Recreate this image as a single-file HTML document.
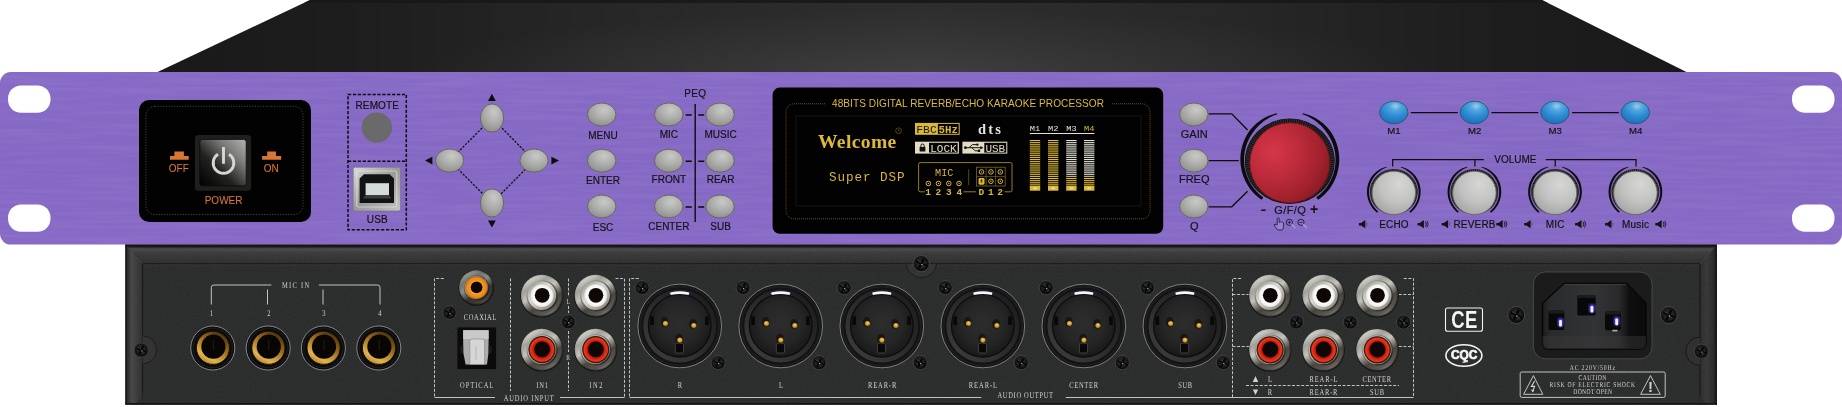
<!DOCTYPE html>
<html><head><meta charset="utf-8"><title>48BITS DIGITAL REVERB/ECHO KARAOKE PROCESSOR</title>
<style>html,body{margin:0;padding:0;background:#fff;}body{width:1842px;height:407px;overflow:hidden;font-family:"Liberation Sans",sans-serif;}svg{display:block}</style>
</head><body>
<svg style="opacity:0.9999" width="1842" height="407" viewBox="0 0 1842 407">

<defs>
<linearGradient id="topg" x1="157" y1="0" x2="1687" y2="0" gradientUnits="userSpaceOnUse">
<stop offset="0" stop-color="#181918"/><stop offset="0.12" stop-color="#1c1d1c"/><stop offset="0.3" stop-color="#262726"/><stop offset="0.5" stop-color="#2d2e2d"/><stop offset="0.7" stop-color="#262726"/><stop offset="0.88" stop-color="#1c1d1c"/><stop offset="1" stop-color="#181918"/></linearGradient>
<radialGradient id="topglow" cx="921" cy="76" r="520" gradientUnits="userSpaceOnUse" gradientTransform="translate(0 76) scale(1 0.13) translate(0 -76)">
<stop offset="0" stop-color="#fff" stop-opacity="0.085"/><stop offset="0.5" stop-color="#fff" stop-opacity="0.04"/><stop offset="1" stop-color="#fff" stop-opacity="0"/></radialGradient>
<linearGradient id="purp" x1="0" y1="0" x2="0" y2="1">
<stop offset="0" stop-color="#876ac6"/><stop offset="0.5" stop-color="#8568c4"/><stop offset="1" stop-color="#876ac6"/></linearGradient>
<filter id="brush" x="0" y="0" width="100%" height="100%">
<feTurbulence type="fractalNoise" baseFrequency="0.012 0.24" numOctaves="2" seed="7" result="n"/>
<feColorMatrix in="n" type="matrix" values="0 0 0 0 1  0 0 0 0 1  0 0 0 0 1  0.9 0 0 0 -0.36" result="a"/>
<feComposite in="a" in2="SourceGraphic" operator="in"/>
</filter>
<filter id="brushd" x="0" y="0" width="100%" height="100%">
<feTurbulence type="fractalNoise" baseFrequency="0.010 0.2" numOctaves="2" seed="23" result="n"/>
<feColorMatrix in="n" type="matrix" values="0 0 0 0 0.32  0 0 0 0 0.2  0 0 0 0 0.6  0.9 0 0 0 -0.36" result="a"/>
<feComposite in="a" in2="SourceGraphic" operator="in"/>
</filter>
<filter id="grain" x="0" y="0" width="100%" height="100%">
<feTurbulence type="fractalNoise" baseFrequency="0.9" numOctaves="2" seed="3" result="n"/>
<feColorMatrix in="n" type="matrix" values="0 0 0 0 1  0 0 0 0 1  0 0 0 0 1  0.55 0 0 0 -0.22" result="a"/>
<feComposite in="a" in2="SourceGraphic" operator="in"/>
</filter>
<filter id="blur1"><feGaussianBlur stdDeviation="0.8"/></filter>
<filter id="blur2"><feGaussianBlur stdDeviation="1.6"/></filter>
<radialGradient id="btn" cx="0.58" cy="0.3" r="0.75">
<stop offset="0" stop-color="#c9c9c7"/><stop offset="0.5" stop-color="#adaeab"/><stop offset="1" stop-color="#8c8d89"/></radialGradient>
<radialGradient id="bbtn" cx="0.56" cy="0.22" r="0.8">
<stop offset="0" stop-color="#9dcbe4"/><stop offset="0.25" stop-color="#4fa6e0"/><stop offset="0.6" stop-color="#2b88d2"/><stop offset="1" stop-color="#1b6fb8"/></radialGradient>
<radialGradient id="redk" cx="0.3" cy="0.36" r="0.8">
<stop offset="0" stop-color="#d5364a"/><stop offset="0.4" stop-color="#bd2b3a"/><stop offset="0.75" stop-color="#a1212c"/><stop offset="1" stop-color="#821820"/></radialGradient>
<radialGradient id="greyk" cx="0.62" cy="0.3" r="0.85">
<stop offset="0" stop-color="#d6d6d4"/><stop offset="0.5" stop-color="#c2c2c0"/><stop offset="1" stop-color="#9c9c9a"/></radialGradient>
<linearGradient id="pwr" x1="1" y1="0" x2="0" y2="1">
<stop offset="0" stop-color="#b4b5b3"/><stop offset="0.3" stop-color="#7a7b79"/><stop offset="0.62" stop-color="#222221"/><stop offset="1" stop-color="#000"/></linearGradient>
<linearGradient id="usbm" x1="0" y1="0" x2="1" y2="1">
<stop offset="0" stop-color="#d9d9d7"/><stop offset="0.5" stop-color="#9a9a98"/><stop offset="1" stop-color="#c4c4c2"/></linearGradient>
<linearGradient id="goldring" x1="0.8" y1="0" x2="0.2" y2="1">
<stop offset="0" stop-color="#3e2808"/><stop offset="0.4" stop-color="#98681a"/><stop offset="0.78" stop-color="#e2b44e"/><stop offset="1" stop-color="#aa7626"/></linearGradient>
<linearGradient id="silver" x1="0.2" y1="0" x2="0.8" y2="1">
<stop offset="0" stop-color="#ecece6"/><stop offset="0.24" stop-color="#a2a29a"/><stop offset="0.42" stop-color="#c4c4bc"/><stop offset="0.66" stop-color="#48443e"/><stop offset="0.86" stop-color="#5c5852"/><stop offset="1" stop-color="#bcbcb4"/></linearGradient>
<linearGradient id="rimsh" x1="0" y1="0" x2="1" y2="1"><stop offset="0" stop-color="#fff" stop-opacity="0.5"/><stop offset="0.5" stop-color="#000" stop-opacity="0"/><stop offset="1" stop-color="#000" stop-opacity="0.55"/></linearGradient>
<linearGradient id="groove" x1="0.1" y1="0.1" x2="0.9" y2="0.9"><stop offset="0" stop-color="#b0b0aa"/><stop offset="0.4" stop-color="#6a6a62"/><stop offset="1" stop-color="#1e1a16"/></linearGradient>
<linearGradient id="lip" x1="0.15" y1="0.1" x2="0.85" y2="0.9"><stop offset="0" stop-color="#a4a49e"/><stop offset="0.4" stop-color="#dcdcd6"/><stop offset="1" stop-color="#8c8a84"/></linearGradient>
<radialGradient id="wins" cx="0.5" cy="0.5" r="0.5"><stop offset="0.6" stop-color="#ffffff"/><stop offset="0.88" stop-color="#f4f2ee"/><stop offset="1" stop-color="#cfccc6"/></radialGradient>
<radialGradient id="rins" cx="0.5" cy="0.5" r="0.5"><stop offset="0.6" stop-color="#a81206"/><stop offset="0.78" stop-color="#dc2812"/><stop offset="0.92" stop-color="#e83a20"/><stop offset="1" stop-color="#8a180a"/></radialGradient>
<radialGradient id="oins" cx="0.5" cy="0.5" r="0.5"><stop offset="0.5" stop-color="#f8b050"/><stop offset="0.68" stop-color="#f4901a"/><stop offset="0.9" stop-color="#ee860e"/><stop offset="1" stop-color="#a85a0c"/></radialGradient>
<linearGradient id="bevt" x1="0" y1="247" x2="0" y2="264" gradientUnits="userSpaceOnUse"><stop offset="0" stop-color="#2a2a2a"/><stop offset="0.12" stop-color="#4a4a4a"/><stop offset="0.35" stop-color="#3b3b3b"/><stop offset="1" stop-color="#2e2e2e"/></linearGradient>
<linearGradient id="bevl" x1="125.5" y1="0" x2="142.5" y2="0" gradientUnits="userSpaceOnUse"><stop offset="0" stop-color="#1e1e1e"/><stop offset="0.12" stop-color="#2c2c2c"/><stop offset="0.36" stop-color="#474747"/><stop offset="0.65" stop-color="#3c3c3c"/><stop offset="1" stop-color="#2f2f2f"/></linearGradient>
<linearGradient id="bevr" x1="1700" y1="0" x2="1717" y2="0" gradientUnits="userSpaceOnUse"><stop offset="0" stop-color="#2d2d2d"/><stop offset="0.4" stop-color="#373737"/><stop offset="0.75" stop-color="#2c2c2c"/><stop offset="1" stop-color="#171717"/></linearGradient>
<linearGradient id="cav" x1="1542.5" y1="0" x2="1646" y2="0" gradientUnits="userSpaceOnUse"><stop offset="0" stop-color="#1c1c1d"/><stop offset="0.08" stop-color="#2a2b2c"/><stop offset="0.5" stop-color="#323335"/><stop offset="0.74" stop-color="#2a2a2c"/><stop offset="0.84" stop-color="#0f0f0f"/><stop offset="1" stop-color="#0a0a0a"/></linearGradient>
<linearGradient id="xlbev" x1="0.85" y1="0.1" x2="0.15" y2="0.9"><stop offset="0" stop-color="#1e1e1e"/><stop offset="0.5" stop-color="#2a2a2a"/><stop offset="1" stop-color="#3a3a3a"/></linearGradient>
<radialGradient id="xlrin" cx="0.5" cy="0.45" r="0.6">
<stop offset="0" stop-color="#2d2d2d"/><stop offset="0.55" stop-color="#262626"/><stop offset="0.85" stop-color="#1b1b1b"/><stop offset="1" stop-color="#121212"/></radialGradient>
<radialGradient id="pin" cx="0.5" cy="0.4" r="0.6">
<stop offset="0" stop-color="#f6d878"/><stop offset="0.6" stop-color="#c8962c"/><stop offset="1" stop-color="#6a4810"/></radialGradient>
<radialGradient id="scr" cx="0.45" cy="0.4" r="0.6">
<stop offset="0" stop-color="#2e2e2e"/><stop offset="0.6" stop-color="#151515"/><stop offset="1" stop-color="#080808"/></radialGradient>
<pattern id="strG" x="0" y="140" width="12" height="1.9" patternUnits="userSpaceOnUse"><rect width="12" height="1.0" fill="#e4c03a"/></pattern>
<pattern id="strW" x="0" y="140" width="12" height="1.9" patternUnits="userSpaceOnUse"><rect width="12" height="1.0" fill="#ece9dc"/></pattern>
<g id="screw7">
<circle r="7.4" fill="#0c0c0c"/><circle r="7.1" fill="url(#scr)" stroke="#909090" stroke-width="0.5" stroke-opacity="0.75"/>
<circle r="4.6" fill="#242424" opacity="0.9"/>
<path d="M-3.7 -1.7 L3.7 1.7 M-1.7 3.5 L1.7 -3.5" stroke="#040404" stroke-width="1.9" stroke-linecap="round"/>
<path d="M-3.4 -2.5 L0 -0.9 M0.6 1.3 L3.2 2.5" stroke="#6a6a6a" stroke-width="0.5" opacity="0.9"/>
<circle cx="0.5" cy="0.8" r="0.65" fill="#d8d8d8" opacity="0.85"/>
</g>
<g id="spkL"><path d="M0 2.5 H2.2 L6.4 -0.3 V7.8 L2.2 5 H0 Z" fill="#141414"/><path d="M7.4 2 Q8.6 3.75 7.4 5.5" fill="none" stroke="#3c3360" stroke-width="0.8" opacity="0.7"/></g>
<g id="spkR"><path d="M0 2.5 H2.2 L6.4 -0.3 V7.8 L2.2 5 H0 Z" fill="#141414"/>
<path d="M7.8 1.4 Q9.8 3.75 7.8 6.1" fill="none" stroke="#2a2540" stroke-width="1.1"/>
<path d="M9.4 0.3 Q12 3.75 9.4 7.2" fill="none" stroke="#2a2540" stroke-width="1"/></g>
</defs>

<polygon points="310,0 1542,0 1687.5,72.5 156.5,72.5" fill="url(#topg)"/>
<polygon points="310,0 1542,0 1687.5,72.5 156.5,72.5" fill="url(#topglow)"/>
<polygon points="310,0 1542,0 1548,3 304,3" fill="#161716" opacity="0.85"/>
<rect x="125.5" y="244.2" width="1591.5" height="160.40000000000003" fill="#2b2c2c"/>
<polygon points="125.5,244.2 1717,244.2 1700,264 142.5,264" fill="url(#bevt)"/>
<polygon points="125.5,244.2 142.5,264 142.5,404.6 125.5,404.6" fill="url(#bevl)"/>
<polygon points="1717,244.2 1700,264 1700,404.6 1717,404.6" fill="url(#bevr)"/>
<rect x="142.5" y="264" width="1557.5" height="140.60000000000002" fill="#2b2c2c"/>
<path d="M142.5 404.6 V263.8 H1700 V404.6" fill="none" stroke="#171717" stroke-width="1.1"/>
<path d="M143.5 265 H1699" fill="none" stroke="#3c3d3d" stroke-width="0.6"/>
<path d="M126.5 246.2 L142.5 264 M1716 246.2 L1700 264" fill="none" stroke="#4a4a4a" stroke-width="0.7"/>
<rect x="125.5" y="244.2" width="1591.5" height="3" fill="#161616"/>
<rect x="125.5" y="244.2" width="1.4" height="160.40000000000003" fill="#1a1a1a"/>
<rect x="1715.4" y="244.2" width="1.6" height="160.40000000000003" fill="#171717"/>
<path d="M142.5 392 Q142 402 131 404.6 H143 Z" fill="#2b2c2c"/>
<path d="M1700 392 Q1700.5 402 1711 404.6 H1699 Z" fill="#2b2c2c"/>
<rect x="125.5" y="403.0" width="1591.5" height="1.6" fill="#12131a"/>
<rect x="125.5" y="244.2" width="1591.5" height="160.40000000000003" fill="#fff" filter="url(#grain)" opacity="0.15"/>
<g>
<rect x="0" y="72" width="1842" height="172.6" rx="11" ry="11" fill="url(#purp)"/>
<rect x="0" y="72" width="1842" height="172.6" rx="11" ry="11" fill="#fff" filter="url(#brush)" opacity="0.13"/>
<rect x="0" y="72" width="1842" height="172.6" rx="11" ry="11" fill="#fff" filter="url(#brushd)" opacity="0.22"/>
</g>
<rect x="8" y="85.5" width="42.5" height="27.2" rx="13" ry="13" fill="#fff"/>
<rect x="8" y="204.5" width="42.5" height="27.2" rx="13" ry="13" fill="#fff"/>
<rect x="1792" y="85.5" width="42.5" height="27.2" rx="13" ry="13" fill="#fff"/>
<rect x="1792" y="204.5" width="42.5" height="27.2" rx="13" ry="13" fill="#fff"/>
<rect x="139" y="100" width="172" height="122" rx="10" ry="10" fill="#020202"/>
<rect x="146" y="106.3" width="157" height="108.2" rx="9" ry="9" fill="none" stroke="#4c4c4c" stroke-width="0.9" stroke-dasharray="1.2 1.5"/>
<rect x="194.9" y="135" width="56.2" height="55.8" rx="3.5" fill="#1f201d"/>
<rect x="199.8" y="139.4" width="46.4" height="46.4" rx="2.5" fill="url(#pwr)"/>
<rect x="199.8" y="139.4" width="46.4" height="46.4" rx="2.5" fill="none" stroke="#0a0a0a" stroke-width="0.8"/>
<path d="M228.96 154.27 A10.3 10.3 0 1 1 218.04 154.27" fill="none" stroke="#d6d6d4" stroke-width="2.9" stroke-linecap="butt"/>
<path d="M223.5 147 V163.8" stroke="#d6d6d4" stroke-width="2.9"/>
<path d="M174.4 151.5 H183.9 V156 H188.7 V159.7 H170 V156 H174.4 Z" fill="#da7634"/>
<path d="M267.2 151.5 H276 V156 H281.2 V159.7 H262.1 V156 H267.2 Z" fill="#da7634"/>
<text x="178.8" y="172" font-size="10" text-anchor="middle" font-family="Liberation Sans, Arial, sans-serif" fill="#da7634" stroke="#da7634" stroke-width="0.08" >OFF</text>
<text x="271.2" y="172" font-size="10" text-anchor="middle" font-family="Liberation Sans, Arial, sans-serif" fill="#da7634" stroke="#da7634" stroke-width="0.08" >ON</text>
<text x="223.6" y="204" font-size="10" text-anchor="middle" font-family="Liberation Sans, Arial, sans-serif" fill="#da7634" stroke="#da7634" stroke-width="0.08" >POWER</text>
<path d="M348 94.5 H406.3 V229.8 H348 Z M348 161.2 H406.3" fill="none" stroke="#0c0c0c" stroke-width="1.5" stroke-dasharray="3.2 1.7"/>
<text x="377.3" y="109.2" font-size="10" text-anchor="middle" font-family="Liberation Sans, Arial, sans-serif" fill="#141414" stroke="#141414" stroke-width="0.18" letter-spacing="0.15">REMOTE</text>
<circle cx="376.8" cy="127.6" r="15.2" fill="#6a6a6a"/>
<rect x="353.2" y="167.2" width="47.3" height="43.8" rx="2" fill="url(#usbm)"/>
<rect x="353.2" y="167.2" width="47.3" height="43.8" rx="2" fill="none" stroke="#777" stroke-width="0.7"/>
<rect x="356.8" y="171" width="40" height="36" rx="1.5" fill="none" stroke="#efefef" stroke-width="1.2" opacity="0.55"/>
<path d="M364 174.3 H389.6 L394 178.5 V203 H359.6 V178.5 Z" fill="#131313"/>
<path d="M365.6 183.2 H389 V195 H365.6 Z" fill="#d3dbdb"/>
<path d="M365.6 195 H389 L391.5 198.5 H362.8 Z" fill="#3c3d3d"/>
<text x="377.4" y="223.3" font-size="10" text-anchor="middle" font-family="Liberation Sans, Arial, sans-serif" fill="#141414" stroke="#141414" stroke-width="0.18" letter-spacing="0.2">USB</text>
<path d="M492 118 L534 160.6 L492 203 L449.6 160.6 Z" fill="none" stroke="#111" stroke-width="1.3" stroke-dasharray="2.2 1.4"/>
<ellipse cx="492" cy="118" rx="11.6" ry="14.1" fill="url(#btn)" stroke="#62635a" stroke-width="0.9"/>
<ellipse cx="492" cy="203" rx="11.6" ry="14.1" fill="url(#btn)" stroke="#62635a" stroke-width="0.9"/>
<ellipse cx="449.6" cy="160.6" rx="14.1" ry="11.6" fill="url(#btn)" stroke="#62635a" stroke-width="0.9"/>
<ellipse cx="534" cy="160.6" rx="14.1" ry="11.6" fill="url(#btn)" stroke="#62635a" stroke-width="0.9"/>
<path d="M491.9 93.8 L495.8 101 H488 Z" fill="#0c0c0c"/>
<path d="M491.9 227.6 L495.8 220.6 H488 Z" fill="#0c0c0c"/>
<path d="M425 160.6 L432.4 156.8 V164.4 Z" fill="#0c0c0c"/>
<path d="M559 160.6 L551.4 156.8 V164.4 Z" fill="#0c0c0c"/>
<ellipse cx="601.7" cy="114.5" rx="14.25" ry="11.5" fill="url(#btn)" stroke="#62635a" stroke-width="0.9"/>
<text x="603" y="138.7" font-size="10" text-anchor="middle" font-family="Liberation Sans, Arial, sans-serif" fill="#141414" stroke="#141414" stroke-width="0.18" >MENU</text>
<ellipse cx="601.7" cy="160.7" rx="14.25" ry="11.5" fill="url(#btn)" stroke="#62635a" stroke-width="0.9"/>
<text x="603" y="184" font-size="10" text-anchor="middle" font-family="Liberation Sans, Arial, sans-serif" fill="#141414" stroke="#141414" stroke-width="0.18" >ENTER</text>
<ellipse cx="601.7" cy="206.5" rx="14.25" ry="11.5" fill="url(#btn)" stroke="#62635a" stroke-width="0.9"/>
<text x="603" y="231" font-size="10" text-anchor="middle" font-family="Liberation Sans, Arial, sans-serif" fill="#141414" stroke="#141414" stroke-width="0.18" >ESC</text>
<text x="695.3" y="97.1" font-size="10" text-anchor="middle" font-family="Liberation Sans, Arial, sans-serif" fill="#141414" stroke="#141414" stroke-width="0.18" letter-spacing="0.3">PEQ</text>
<path d="M695.2 104 V222" stroke="#0c0c0c" stroke-width="1.4"/>
<ellipse cx="668.7" cy="114.5" rx="14.25" ry="11.5" fill="url(#btn)" stroke="#62635a" stroke-width="0.9"/>
<ellipse cx="720" cy="114.5" rx="14.25" ry="11.5" fill="url(#btn)" stroke="#62635a" stroke-width="0.9"/>
<path d="M685.6 115.0 H691.8 M698.2 115.0 H704.2" stroke="#0a0a0a" stroke-width="1.5"/>
<text x="668.8" y="137.6" font-size="10" text-anchor="middle" font-family="Liberation Sans, Arial, sans-serif" fill="#141414" stroke="#141414" stroke-width="0.18" >MIC</text>
<text x="720.6" y="137.6" font-size="10" text-anchor="middle" font-family="Liberation Sans, Arial, sans-serif" fill="#141414" stroke="#141414" stroke-width="0.18" >MUSIC</text>
<ellipse cx="668.7" cy="160.7" rx="14.25" ry="11.5" fill="url(#btn)" stroke="#62635a" stroke-width="0.9"/>
<ellipse cx="720" cy="160.7" rx="14.25" ry="11.5" fill="url(#btn)" stroke="#62635a" stroke-width="0.9"/>
<path d="M685.6 161.2 H691.8 M698.2 161.2 H704.2" stroke="#0a0a0a" stroke-width="1.5"/>
<text x="668.8" y="182.6" font-size="10" text-anchor="middle" font-family="Liberation Sans, Arial, sans-serif" fill="#141414" stroke="#141414" stroke-width="0.18" >FRONT</text>
<text x="720.6" y="182.6" font-size="10" text-anchor="middle" font-family="Liberation Sans, Arial, sans-serif" fill="#141414" stroke="#141414" stroke-width="0.18" >REAR</text>
<ellipse cx="668.7" cy="206.5" rx="14.25" ry="11.5" fill="url(#btn)" stroke="#62635a" stroke-width="0.9"/>
<ellipse cx="720" cy="206.5" rx="14.25" ry="11.5" fill="url(#btn)" stroke="#62635a" stroke-width="0.9"/>
<path d="M685.6 207.0 H691.8 M698.2 207.0 H704.2" stroke="#0a0a0a" stroke-width="1.5"/>
<text x="668.8" y="229.6" font-size="10" text-anchor="middle" font-family="Liberation Sans, Arial, sans-serif" fill="#141414" stroke="#141414" stroke-width="0.18" >CENTER</text>
<text x="720.6" y="229.6" font-size="10" text-anchor="middle" font-family="Liberation Sans, Arial, sans-serif" fill="#141414" stroke="#141414" stroke-width="0.18" >SUB</text>
<rect x="772.6" y="87.6" width="390.6" height="146.2" rx="7" fill="#020202"/>
<rect x="786" y="103.8" width="364" height="115" rx="8" fill="none" stroke="#8a7424" stroke-width="0.8" stroke-dasharray="0.9 1.1"/>
<rect x="826" y="99" width="285" height="10" fill="#020202"/>
<rect x="796" y="116" width="345" height="90" fill="none" stroke="#151512" stroke-width="1"/>
<text x="832" y="107" font-size="10.1" textLength="272" lengthAdjust="spacing" font-family="Liberation Sans, Arial, sans-serif" fill="#dbbb3c">48BITS DIGITAL REVERB/ECHO KARAOKE PROCESSOR</text>
<text x="818" y="148" font-size="19.6" font-weight="bold" textLength="78.3" lengthAdjust="spacing" font-family="Liberation Serif, Times New Roman, serif" fill="#dcba38">Welcome</text>
<circle cx="898.6" cy="130.8" r="2.9" fill="none" stroke="#6f5c1c" stroke-width="0.7"/><path d="M898.6 129 V130.9 H900" fill="none" stroke="#6f5c1c" stroke-width="0.6"/>
<text x="829" y="180.7" font-size="12.6" textLength="75.5" lengthAdjust="spacing" font-family="Liberation Mono, DejaVu Sans Mono, monospace" fill="#d9b83a">Super DSP</text>
<rect x="915" y="122.9" width="44.7" height="11.9" fill="#d9b83a"/>
<rect x="937.9" y="123.9" width="20.8" height="9.9" fill="#050505"/>
<text x="916.2" y="132.6" font-size="10" textLength="20.6" lengthAdjust="spacingAndGlyphs" font-family="Liberation Mono, DejaVu Sans Mono, monospace" fill="#1a1405">FBC</text>
<text x="938.6" y="132.6" font-size="10" font-weight="bold" textLength="19.4" lengthAdjust="spacingAndGlyphs" font-family="Liberation Mono, DejaVu Sans Mono, monospace" fill="#d9b83a">5Hz</text>
<text x="978" y="133.8" font-size="14.5" font-weight="bold" textLength="22.8" lengthAdjust="spacing" font-family="Liberation Serif, Times New Roman, serif" fill="#e4e2dc">dts</text>
<rect x="915" y="141.7" width="43.9" height="11.9" fill="#e3dcc2"/>
<rect x="929" y="142.8" width="28.7" height="9.8" fill="#060606"/>
<rect x="919.6" y="147" width="5.8" height="4.6" rx="0.6" fill="#111"/><path d="M920.9 147.2 V145.6 A1.6 1.6 0 0 1 924.1 145.6 V147.2" fill="none" stroke="#111" stroke-width="1"/>
<text x="930.2" y="151.6" font-size="10" textLength="26.4" lengthAdjust="spacingAndGlyphs" font-family="Liberation Mono, DejaVu Sans Mono, monospace" fill="#e3dcc2">LOCK</text>
<rect x="962.4" y="141.7" width="44.9" height="11.9" fill="#e3dcc2"/>
<rect x="984.3" y="142.8" width="22" height="9.8" fill="#060606"/>
<path d="M965 147.7 H982 M969 147.7 L972.5 144.6 H976.5 M972 147.7 L975 150.8 H978.5" fill="none" stroke="#111" stroke-width="1"/><circle cx="965.4" cy="147.7" r="1.4" fill="#111"/><path d="M980.3 145.9 L983.4 147.7 L980.3 149.5Z" fill="#111"/><circle cx="977.3" cy="144.6" r="1.2" fill="#111"/><rect x="977.8" y="149.6" width="2.4" height="2.4" fill="#111"/>
<text x="985.4" y="151.6" font-size="10" textLength="19.8" lengthAdjust="spacingAndGlyphs" font-family="Liberation Mono, DejaVu Sans Mono, monospace" fill="#e3dcc2">USB</text>
<text x="1029.8" y="131.3" font-size="7.5" textLength="10.4" lengthAdjust="spacingAndGlyphs" font-family="Liberation Mono, DejaVu Sans Mono, monospace" fill="#e6e3d6">M1</text>
<rect x="1029.8" y="140" width="10.4" height="46" fill="url(#strG)"/>
<rect x="1029.8" y="186" width="10.4" height="4.7" fill="#d9b83a"/>
<rect x="1033.2" y="187.3" width="3.6" height="2" fill="#f0dc88"/>
<text x="1048" y="131.3" font-size="7.5" textLength="10.4" lengthAdjust="spacingAndGlyphs" font-family="Liberation Mono, DejaVu Sans Mono, monospace" fill="#e6e3d6">M2</text>
<rect x="1048" y="140" width="10.4" height="46" fill="url(#strG)"/>
<rect x="1048" y="186" width="10.4" height="4.7" fill="#d9b83a"/>
<rect x="1051.4" y="187.3" width="3.6" height="2" fill="#f0dc88"/>
<text x="1066.2" y="131.3" font-size="7.5" textLength="10.4" lengthAdjust="spacingAndGlyphs" font-family="Liberation Mono, DejaVu Sans Mono, monospace" fill="#e6e3d6">M3</text>
<rect x="1066.2" y="140" width="10.4" height="35.6" fill="url(#strW)"/>
<rect x="1066.2" y="175.6" width="10.4" height="10.4" fill="url(#strG)"/>
<rect x="1066.2" y="186" width="10.4" height="4.7" fill="#d9b83a"/>
<rect x="1069.6000000000001" y="187.3" width="3.6" height="2" fill="#f0dc88"/>
<text x="1084" y="131.3" font-size="7.5" textLength="10.4" lengthAdjust="spacingAndGlyphs" font-family="Liberation Mono, DejaVu Sans Mono, monospace" fill="#d9b83a">M4</text>
<rect x="1084" y="140" width="10.4" height="35.6" fill="url(#strW)"/>
<rect x="1084" y="175.6" width="10.4" height="10.4" fill="url(#strG)"/>
<rect x="1084" y="186" width="10.4" height="4.7" fill="#d9b83a"/>
<rect x="1087.4" y="187.3" width="3.6" height="2" fill="#f0dc88"/>
<path d="M1029.8 133.5 H1094.4" stroke="#e6e2ce" stroke-width="1.1"/>
<path d="M924.8 191.8 H920.2 Q918.6 191.8 918.6 190.2 V164.2 Q918.6 162.6 920.2 162.6 H1010.4 Q1012 162.6 1012 164.2 V190.2 Q1012 191.8 1010.4 191.8 H1004.4 M963.5 191.8 H976" fill="none" stroke="#b89a2e" stroke-width="0.8"/>
<text x="935" y="176" font-size="10.2" textLength="18.4" lengthAdjust="spacingAndGlyphs" font-family="Liberation Mono, DejaVu Sans Mono, monospace" fill="#d9b83a">MIC</text>
<circle cx="928.4" cy="183.5" r="2.3" fill="none" stroke="#d9b83a" stroke-width="1"/><circle cx="928.4" cy="183.5" r="0.7" fill="#d9b83a"/>
<circle cx="938.5" cy="183.5" r="2.3" fill="none" stroke="#d9b83a" stroke-width="1"/><circle cx="938.5" cy="183.5" r="0.7" fill="#d9b83a"/>
<circle cx="948.8" cy="183.5" r="2.3" fill="none" stroke="#d9b83a" stroke-width="1"/><circle cx="948.8" cy="183.5" r="0.7" fill="#d9b83a"/>
<circle cx="959" cy="183.5" r="2.3" fill="none" stroke="#d9b83a" stroke-width="1"/><circle cx="959" cy="183.5" r="0.7" fill="#d9b83a"/>
<path d="M968.7 169.3 V185" stroke="#6b5a20" stroke-width="0.8"/>
<rect x="976.6" y="167.2" width="28.6" height="18.8" fill="none" stroke="#7d6922" stroke-width="0.8"/>
<path d="M986.1 167.2 V186 M995.6 167.2 V186 M976.6 176.6 H1005.2" stroke="#7d6922" stroke-width="0.7"/>
<circle cx="981.5" cy="171.9" r="2.3" fill="none" stroke="#d9b83a" stroke-width="1"/><circle cx="981.5" cy="171.9" r="0.7" fill="#d9b83a"/>
<rect x="978.5" y="177.9" width="6" height="6.8" rx="1.4" fill="#d9b83a"/><rect x="980.7" y="179.5" width="1.6" height="3" fill="#3a2d08"/>
<circle cx="990.9" cy="171.9" r="2.3" fill="none" stroke="#d9b83a" stroke-width="1"/><circle cx="990.9" cy="171.9" r="0.7" fill="#d9b83a"/>
<circle cx="990.9" cy="181.3" r="2.3" fill="none" stroke="#d9b83a" stroke-width="1"/><circle cx="990.9" cy="181.3" r="0.7" fill="#d9b83a"/>
<circle cx="1000.3" cy="171.9" r="2.3" fill="none" stroke="#d9b83a" stroke-width="1"/><circle cx="1000.3" cy="171.9" r="0.7" fill="#d9b83a"/>
<circle cx="1000.3" cy="181.3" r="2.3" fill="none" stroke="#d9b83a" stroke-width="1"/><circle cx="1000.3" cy="181.3" r="0.7" fill="#d9b83a"/>
<text x="928" y="195.3" font-size="9.5" font-weight="bold" text-anchor="middle" font-family="Liberation Mono, DejaVu Sans Mono, monospace" fill="#d9b83a">1</text>
<text x="938.4" y="195.3" font-size="9.5" font-weight="bold" text-anchor="middle" font-family="Liberation Mono, DejaVu Sans Mono, monospace" fill="#d9b83a">2</text>
<text x="948.8" y="195.3" font-size="9.5" font-weight="bold" text-anchor="middle" font-family="Liberation Mono, DejaVu Sans Mono, monospace" fill="#d9b83a">3</text>
<text x="959.3" y="195.3" font-size="9.5" font-weight="bold" text-anchor="middle" font-family="Liberation Mono, DejaVu Sans Mono, monospace" fill="#d9b83a">4</text>
<text x="981.4" y="195.3" font-size="9.5" font-weight="bold" text-anchor="middle" font-family="Liberation Mono, DejaVu Sans Mono, monospace" fill="#d9b83a">D</text>
<text x="990.8" y="195.3" font-size="9.5" font-weight="bold" text-anchor="middle" font-family="Liberation Mono, DejaVu Sans Mono, monospace" fill="#d9b83a">1</text>
<text x="1000.2" y="195.3" font-size="9.5" font-weight="bold" text-anchor="middle" font-family="Liberation Mono, DejaVu Sans Mono, monospace" fill="#d9b83a">2</text>
<path d="M1208.6 113.8 H1231.8 L1247.6 130 M1208.6 160.6 H1238.8 M1208.6 206.8 H1231.8 L1247.6 191.2" fill="none" stroke="#0c0c0c" stroke-width="1.3"/>
<ellipse cx="1193.8" cy="114.5" rx="14.25" ry="11.5" fill="url(#btn)" stroke="#62635a" stroke-width="0.9"/>
<text x="1194.2" y="137.5" font-size="11" text-anchor="middle" font-family="Liberation Sans, Arial, sans-serif" fill="#141414" stroke="#141414" stroke-width="0.18" >GAIN</text>
<ellipse cx="1193.8" cy="160.7" rx="14.25" ry="11.5" fill="url(#btn)" stroke="#62635a" stroke-width="0.9"/>
<text x="1194.2" y="182.6" font-size="11" text-anchor="middle" font-family="Liberation Sans, Arial, sans-serif" fill="#141414" stroke="#141414" stroke-width="0.18" >FREQ</text>
<ellipse cx="1193.8" cy="206.5" rx="14.25" ry="11.5" fill="url(#btn)" stroke="#62635a" stroke-width="0.9"/>
<text x="1194.2" y="230" font-size="11" text-anchor="middle" font-family="Liberation Sans, Arial, sans-serif" fill="#141414" stroke="#141414" stroke-width="0.18" >Q</text>
<path d="M1302.64 113.30 L1304.86 113.79 L1307.04 114.43 L1309.20 115.19 L1311.31 116.05 L1313.39 117.03 L1315.42 118.10 L1317.40 119.27 L1319.32 120.54 L1321.18 121.91 L1322.98 123.36 L1324.71 124.90 L1326.37 126.53 L1327.95 128.24 L1329.45 130.02 L1330.82 131.90 L1332.08 133.86 L1333.24 135.88 L1334.31 137.95 L1335.28 140.07 L1336.14 142.23 L1336.91 144.44 L1337.56 146.67 L1338.11 148.94 L1338.56 151.22 L1338.89 153.53 L1339.12 155.85 L1339.23 158.17 L1339.23 160.50 L1339.13 162.82 L1338.91 165.14 L1338.59 167.45 L1338.15 169.73 L1337.61 171.99 L1336.97 174.23 L1336.21 176.43 L1335.36 178.59 L1334.40 180.70 L1333.35 182.77 L1332.19 184.79 L1330.95 186.75 L1329.61 188.65 L1328.19 190.48 L1326.68 192.24 L1325.09 193.93 L1323.42 195.53 L1321.68 197.06 L1319.87 198.51 L1317.99 199.86 L1316.21 197.32 L1317.95 196.02 L1319.62 194.64 L1321.22 193.18 L1322.75 191.65 L1324.21 190.06 L1325.59 188.39 L1326.90 186.66 L1328.11 184.88 L1329.25 183.04 L1330.30 181.15 L1331.25 179.21 L1332.12 177.24 L1332.89 175.22 L1333.56 173.17 L1334.14 171.09 L1334.62 168.99 L1335.00 166.87 L1335.29 164.73 L1335.47 162.58 L1335.55 160.43 L1335.53 158.28 L1335.41 156.13 L1335.19 153.99 L1334.87 151.86 L1334.45 149.74 L1333.93 147.65 L1333.31 145.59 L1332.60 143.56 L1331.80 141.57 L1330.90 139.61 L1329.91 137.70 L1328.84 135.83 L1327.67 134.02 L1326.45 132.25 L1325.19 130.50 L1323.84 128.81 L1322.41 127.19 L1320.91 125.62 L1319.33 124.13 L1317.68 122.71 L1315.97 121.36 L1314.19 120.09 L1312.35 118.90 L1310.45 117.79 L1308.51 116.77 L1306.51 115.83 L1304.47 114.97 L1302.40 114.16Z" fill="#0b0b0b"/>
<path d="M1276.96 113.30 L1274.74 113.79 L1272.56 114.43 L1270.40 115.19 L1268.29 116.05 L1266.21 117.03 L1264.18 118.10 L1262.20 119.27 L1260.28 120.54 L1258.42 121.91 L1256.62 123.36 L1254.89 124.90 L1253.23 126.53 L1251.65 128.24 L1250.15 130.02 L1248.78 131.90 L1247.52 133.86 L1246.36 135.88 L1245.29 137.95 L1244.32 140.07 L1243.46 142.23 L1242.69 144.44 L1242.04 146.67 L1241.49 148.94 L1241.04 151.22 L1240.71 153.53 L1240.48 155.85 L1240.37 158.17 L1240.37 160.50 L1240.47 162.82 L1240.69 165.14 L1241.01 167.45 L1241.45 169.73 L1241.99 171.99 L1242.63 174.23 L1243.39 176.43 L1244.24 178.59 L1245.20 180.70 L1246.25 182.77 L1247.41 184.79 L1248.65 186.75 L1249.99 188.65 L1251.41 190.48 L1252.92 192.24 L1254.51 193.93 L1256.18 195.53 L1257.92 197.06 L1259.73 198.51 L1261.61 199.86 L1263.39 197.32 L1261.65 196.02 L1259.98 194.64 L1258.38 193.18 L1256.85 191.65 L1255.39 190.06 L1254.01 188.39 L1252.70 186.66 L1251.49 184.88 L1250.35 183.04 L1249.30 181.15 L1248.35 179.21 L1247.48 177.24 L1246.71 175.22 L1246.04 173.17 L1245.46 171.09 L1244.98 168.99 L1244.60 166.87 L1244.31 164.73 L1244.13 162.58 L1244.05 160.43 L1244.07 158.28 L1244.19 156.13 L1244.41 153.99 L1244.73 151.86 L1245.15 149.74 L1245.67 147.65 L1246.29 145.59 L1247.00 143.56 L1247.80 141.57 L1248.70 139.61 L1249.69 137.70 L1250.76 135.83 L1251.93 134.02 L1253.15 132.25 L1254.41 130.50 L1255.76 128.81 L1257.19 127.19 L1258.69 125.62 L1260.27 124.13 L1261.92 122.71 L1263.63 121.36 L1265.41 120.09 L1267.25 118.90 L1269.15 117.79 L1271.09 116.77 L1273.09 115.83 L1275.13 114.97 L1277.20 114.16Z" fill="#0b0b0b"/>
<ellipse cx="1289.8" cy="161.3" rx="45" ry="42.7" fill="#121212"/>
<path d="M1289.8 123.3L1289.8 119.1M1291.9 123.4L1292.1 119.2M1294.0 123.5L1294.4 119.3M1296.1 123.8L1296.7 119.6M1298.1 124.1L1299.0 120.0M1300.2 124.6L1301.3 120.5M1302.2 125.2L1303.5 121.2M1304.1 125.8L1305.7 121.9M1306.1 126.6L1307.9 122.7M1308.0 127.4L1310.0 123.7M1309.8 128.4L1312.0 124.8M1311.6 129.4L1314.0 125.9M1313.3 130.6L1315.9 127.2M1315.0 131.8L1317.7 128.5M1316.6 133.1L1319.5 129.9M1318.1 134.4L1321.2 131.5M1319.5 135.9L1322.8 133.1M1320.9 137.4L1324.3 134.7M1322.2 139.0L1325.7 136.5M1323.3 140.6L1327.0 138.3M1324.4 142.3L1328.3 140.2M1325.4 144.0L1329.4 142.1M1326.3 145.8L1330.4 144.1M1327.1 147.7L1331.3 146.2M1327.8 149.6L1332.0 148.3M1328.4 151.5L1332.7 150.4M1328.9 153.4L1333.2 152.5M1329.3 155.4L1333.7 154.7M1329.6 157.3L1334.0 156.9M1329.7 159.3L1334.1 159.1M1329.8 161.3L1334.2 161.3M1329.7 163.3L1334.1 163.5M1329.6 165.3L1334.0 165.7M1329.3 167.2L1333.7 167.9M1328.9 169.2L1333.2 170.1M1328.4 171.1L1332.7 172.2M1327.8 173.0L1332.0 174.3M1327.1 174.9L1331.3 176.4M1326.3 176.8L1330.4 178.5M1325.4 178.6L1329.4 180.5M1324.4 180.3L1328.3 182.4M1323.3 182.0L1327.0 184.3M1322.2 183.6L1325.7 186.1M1320.9 185.2L1324.3 187.9M1319.5 186.7L1322.8 189.5M1318.1 188.2L1321.2 191.1M1316.6 189.5L1319.5 192.7M1315.0 190.8L1317.7 194.1M1313.3 192.0L1315.9 195.4M1311.6 193.2L1314.0 196.7M1309.8 194.2L1312.0 197.8M1269.8 194.2L1267.6 197.8M1268.0 193.2L1265.6 196.7M1266.3 192.0L1263.7 195.4M1264.6 190.8L1261.9 194.1M1263.0 189.5L1260.1 192.7M1261.5 188.2L1258.4 191.1M1260.1 186.7L1256.8 189.5M1258.7 185.2L1255.3 187.9M1257.4 183.6L1253.9 186.1M1256.3 182.0L1252.6 184.3M1255.2 180.3L1251.3 182.4M1254.2 178.6L1250.2 180.5M1253.3 176.8L1249.2 178.5M1252.5 174.9L1248.3 176.4M1251.8 173.0L1247.6 174.3M1251.2 171.1L1246.9 172.2M1250.7 169.2L1246.4 170.1M1250.3 167.2L1245.9 167.9M1250.0 165.3L1245.6 165.7M1249.9 163.3L1245.5 163.5M1249.8 161.3L1245.4 161.3M1249.9 159.3L1245.5 159.1M1250.0 157.3L1245.6 156.9M1250.3 155.4L1245.9 154.7M1250.7 153.4L1246.4 152.5M1251.2 151.5L1246.9 150.4M1251.8 149.6L1247.6 148.3M1252.5 147.7L1248.3 146.2M1253.3 145.8L1249.2 144.1M1254.2 144.0L1250.2 142.1M1255.2 142.3L1251.3 140.2M1256.3 140.6L1252.6 138.3M1257.4 139.0L1253.9 136.5M1258.7 137.4L1255.3 134.7M1260.1 135.9L1256.8 133.1M1261.5 134.4L1258.4 131.5M1263.0 133.1L1260.1 129.9M1264.6 131.8L1261.9 128.5M1266.3 130.6L1263.7 127.2M1268.0 129.4L1265.6 125.9M1269.8 128.4L1267.6 124.8M1271.6 127.4L1269.6 123.7M1273.5 126.6L1271.7 122.7M1275.5 125.8L1273.9 121.9M1277.4 125.2L1276.1 121.2M1279.4 124.6L1278.3 120.5M1281.5 124.1L1280.6 120.0M1283.5 123.8L1282.9 119.6M1285.6 123.5L1285.2 119.3M1287.7 123.4L1287.5 119.2" stroke="#8c8c8c" stroke-width="0.5" opacity="0.55"/>
<circle cx="1289.8" cy="162.8" r="40.1" fill="url(#redk)"/>
<circle cx="1289.8" cy="162.8" r="40.1" fill="none" stroke="#6c1118" stroke-width="0.8"/>
<text transform="translate(1263.4 213.8) scale(1.45 1)" font-size="12" font-weight="bold" text-anchor="middle" font-family="Liberation Sans, Arial, sans-serif" fill="#141414">-</text>
<text x="1290.2" y="213.8" font-size="11" text-anchor="middle" font-family="Liberation Sans, Arial, sans-serif" fill="#141414" stroke="#141414" stroke-width="0.18" letter-spacing="0.35">G/F/Q</text>
<text x="1314.2" y="214.2" font-size="14" font-weight="bold" text-anchor="middle" font-family="Liberation Sans, Arial, sans-serif" fill="#141414">+</text>
<path d="M1277.2 225 V218.3 Q1278.2 217.2 1279.2 218.3 V222.6 L1280.3 221.6 L1281.4 222.4 L1282.4 222 L1283.6 223 V226.6 Q1283.4 229 1282 230 H1277.8 Q1275.4 227.6 1274 224.8 Q1275 223.6 1276.2 224.6 Z" fill="#9a82cc" stroke="#1f2340" stroke-width="0.9" stroke-linejoin="round"/>
<circle cx="1289.4" cy="222.3" r="3.1" fill="#8d74c4" stroke="#1f2340" stroke-width="1"/><path d="M1291.9 224.6 L1294.8000000000002 227.6" stroke="#ab9ad4" stroke-width="1.5" stroke-linecap="round"/>
<path d="M1287.7 222.3 H1291.1000000000001" stroke="#1f2340" stroke-width="0.9"/>
<path d="M1289.4 220.6 V224" stroke="#1f2340" stroke-width="0.9"/>
<circle cx="1301" cy="222.3" r="3.1" fill="#8d74c4" stroke="#1f2340" stroke-width="1"/><path d="M1303.5 224.6 L1306.4 227.6" stroke="#ab9ad4" stroke-width="1.5" stroke-linecap="round"/>
<path d="M1299.3 222.3 H1302.7" stroke="#1f2340" stroke-width="0.9"/>
<path d="M1410.8 112.6 H1457.8000000000002" stroke="#0c0c0c" stroke-width="1.2"/>
<ellipse cx="1393.8" cy="112.5" rx="14.2" ry="11.3" fill="url(#bbtn)" stroke="#2c5868" stroke-width="0.9"/>
<text x="1394.0" y="134.3" font-size="9.6" text-anchor="middle" font-family="Liberation Sans, Arial, sans-serif" fill="#141414" stroke="#141414" stroke-width="0.18" >M1</text>
<path d="M1491.4 112.6 H1538.4" stroke="#0c0c0c" stroke-width="1.2"/>
<ellipse cx="1474.4" cy="112.5" rx="14.2" ry="11.3" fill="url(#bbtn)" stroke="#2c5868" stroke-width="0.9"/>
<text x="1474.6000000000001" y="134.3" font-size="9.6" text-anchor="middle" font-family="Liberation Sans, Arial, sans-serif" fill="#141414" stroke="#141414" stroke-width="0.18" >M2</text>
<path d="M1572 112.6 H1618.8000000000002" stroke="#0c0c0c" stroke-width="1.2"/>
<ellipse cx="1555" cy="112.5" rx="14.2" ry="11.3" fill="url(#bbtn)" stroke="#2c5868" stroke-width="0.9"/>
<text x="1555.2" y="134.3" font-size="9.6" text-anchor="middle" font-family="Liberation Sans, Arial, sans-serif" fill="#141414" stroke="#141414" stroke-width="0.18" >M3</text>
<ellipse cx="1635.4" cy="112.5" rx="14.2" ry="11.3" fill="url(#bbtn)" stroke="#2c5868" stroke-width="0.9"/>
<text x="1635.6000000000001" y="134.3" font-size="9.6" text-anchor="middle" font-family="Liberation Sans, Arial, sans-serif" fill="#141414" stroke="#141414" stroke-width="0.18" >M4</text>
<path d="M1392.7 166.6 V159.6 H1483.8 M1474.9 159.6 V166.6 M1545.8 159.6 H1636 V166.6 M1555.2 159.6 V166.6" fill="none" stroke="#0c0c0c" stroke-width="1.2"/>
<text x="1515.4" y="163" font-size="10" text-anchor="middle" font-family="Liberation Sans, Arial, sans-serif" fill="#141414" stroke="#141414" stroke-width="0.18" >VOLUME</text>
<path d="M1400.99 166.81 L1402.16 167.08 L1403.31 167.43 L1404.44 167.83 L1405.55 168.29 L1406.64 168.81 L1407.71 169.37 L1408.75 169.99 L1409.76 170.66 L1410.74 171.37 L1411.69 172.13 L1412.60 172.94 L1413.48 173.79 L1414.32 174.68 L1415.12 175.60 L1415.85 176.58 L1416.53 177.61 L1417.16 178.66 L1417.73 179.74 L1418.26 180.84 L1418.74 181.97 L1419.17 183.12 L1419.54 184.29 L1419.85 185.47 L1420.12 186.67 L1420.33 187.87 L1420.48 189.09 L1420.57 190.31 L1420.61 191.53 L1420.60 192.75 L1420.53 193.97 L1420.40 195.19 L1420.21 196.40 L1419.98 197.60 L1419.68 198.78 L1419.33 199.96 L1418.93 201.11 L1418.48 202.24 L1417.97 203.36 L1417.42 204.44 L1416.81 205.50 L1416.16 206.53 L1415.46 207.53 L1414.72 208.50 L1413.93 209.43 L1413.11 210.32 L1412.24 211.17 L1411.33 211.99 L1410.39 212.76 L1409.33 211.43 L1410.20 210.69 L1411.03 209.91 L1411.83 209.10 L1412.58 208.25 L1413.30 207.37 L1413.98 206.46 L1414.62 205.52 L1415.21 204.55 L1415.75 203.56 L1416.26 202.54 L1416.71 201.50 L1417.12 200.44 L1417.47 199.37 L1417.78 198.28 L1418.04 197.18 L1418.25 196.07 L1418.41 194.94 L1418.52 193.82 L1418.58 192.69 L1418.58 191.56 L1418.53 190.43 L1418.44 189.30 L1418.29 188.18 L1418.09 187.07 L1417.84 185.97 L1417.54 184.88 L1417.20 183.80 L1416.80 182.74 L1416.36 181.70 L1415.87 180.69 L1415.33 179.69 L1414.75 178.72 L1414.13 177.78 L1413.48 176.86 L1412.80 175.95 L1412.09 175.07 L1411.33 174.22 L1410.54 173.41 L1409.70 172.63 L1408.84 171.89 L1407.93 171.18 L1407.00 170.52 L1406.03 169.89 L1405.04 169.31 L1404.02 168.77 L1402.98 168.27 L1401.91 167.82 L1400.83 167.39Z" fill="#0b0b0b"/>
<path d="M1386.61 166.81 L1385.44 167.08 L1384.29 167.43 L1383.16 167.83 L1382.05 168.29 L1380.96 168.81 L1379.89 169.37 L1378.85 169.99 L1377.84 170.66 L1376.86 171.37 L1375.91 172.13 L1375.00 172.94 L1374.12 173.79 L1373.28 174.68 L1372.48 175.60 L1371.75 176.58 L1371.07 177.61 L1370.44 178.66 L1369.87 179.74 L1369.34 180.84 L1368.86 181.97 L1368.43 183.12 L1368.06 184.29 L1367.75 185.47 L1367.48 186.67 L1367.27 187.87 L1367.12 189.09 L1367.03 190.31 L1366.99 191.53 L1367.00 192.75 L1367.07 193.97 L1367.20 195.19 L1367.39 196.40 L1367.62 197.60 L1367.92 198.78 L1368.27 199.96 L1368.67 201.11 L1369.12 202.24 L1369.63 203.36 L1370.18 204.44 L1370.79 205.50 L1371.44 206.53 L1372.14 207.53 L1372.88 208.50 L1373.67 209.43 L1374.49 210.32 L1375.36 211.17 L1376.27 211.99 L1377.21 212.76 L1378.27 211.43 L1377.40 210.69 L1376.57 209.91 L1375.77 209.10 L1375.02 208.25 L1374.30 207.37 L1373.62 206.46 L1372.98 205.52 L1372.39 204.55 L1371.85 203.56 L1371.34 202.54 L1370.89 201.50 L1370.48 200.44 L1370.13 199.37 L1369.82 198.28 L1369.56 197.18 L1369.35 196.07 L1369.19 194.94 L1369.08 193.82 L1369.02 192.69 L1369.02 191.56 L1369.07 190.43 L1369.16 189.30 L1369.31 188.18 L1369.51 187.07 L1369.76 185.97 L1370.06 184.88 L1370.40 183.80 L1370.80 182.74 L1371.24 181.70 L1371.73 180.69 L1372.27 179.69 L1372.85 178.72 L1373.47 177.78 L1374.12 176.86 L1374.80 175.95 L1375.51 175.07 L1376.27 174.22 L1377.06 173.41 L1377.90 172.63 L1378.76 171.89 L1379.67 171.18 L1380.60 170.52 L1381.57 169.89 L1382.56 169.31 L1383.58 168.77 L1384.62 168.27 L1385.69 167.82 L1386.77 167.39Z" fill="#0b0b0b"/>
<ellipse cx="1393.8" cy="191.9" rx="23.9" ry="22.9" fill="#161616"/>
<path d="M1393.8 171.3L1393.8 169.3M1395.7 171.4L1395.9 169.4M1397.5 171.6L1397.9 169.6M1399.4 172.0L1399.9 170.1M1401.2 172.5L1401.9 170.7M1402.9 173.2L1403.8 171.4M1404.5 174.1L1405.6 172.3M1406.1 175.0L1407.3 173.4M1407.6 176.1L1409.0 174.6M1409.0 177.3L1410.5 175.9M1410.3 178.7L1411.9 177.4M1411.4 180.1L1413.1 178.9M1412.4 181.6L1414.2 180.6M1413.3 183.2L1415.2 182.3M1414.0 184.9L1416.0 184.2M1414.6 186.6L1416.6 186.1M1415.0 188.3L1417.0 188.0M1415.2 190.1L1417.3 189.9M1415.3 191.9L1417.4 191.9M1415.2 193.7L1417.3 193.9M1415.0 195.5L1417.0 195.8M1414.6 197.2L1416.6 197.7M1414.0 198.9L1416.0 199.6M1413.3 200.6L1415.2 201.5M1412.4 202.2L1414.2 203.2M1411.4 203.7L1413.1 204.9M1410.3 205.1L1411.9 206.4M1409.0 206.5L1410.5 207.9M1407.6 207.7L1409.0 209.2M1406.1 208.8L1407.3 210.4M1404.5 209.7L1405.6 211.5M1402.9 210.6L1403.8 212.4M1401.2 211.3L1401.9 213.1M1399.4 211.8L1399.9 213.7M1397.5 212.2L1397.9 214.2M1395.7 212.4L1395.9 214.4M1393.8 212.5L1393.8 214.5M1391.9 212.4L1391.7 214.4M1390.1 212.2L1389.7 214.2M1388.2 211.8L1387.7 213.7M1386.4 211.3L1385.7 213.1M1384.7 210.6L1383.8 212.4M1383.0 209.7L1382.0 211.5M1381.5 208.8L1380.3 210.4M1380.0 207.7L1378.6 209.2M1378.6 206.5L1377.1 207.9M1377.3 205.1L1375.7 206.4M1376.2 203.7L1374.5 204.9M1375.2 202.2L1373.4 203.2M1374.3 200.6L1372.4 201.5M1373.6 198.9L1371.6 199.6M1373.0 197.2L1371.0 197.7M1372.6 195.5L1370.6 195.8M1372.4 193.7L1370.3 193.9M1372.3 191.9L1370.2 191.9M1372.4 190.1L1370.3 189.9M1372.6 188.3L1370.6 188.0M1373.0 186.6L1371.0 186.1M1373.6 184.9L1371.6 184.2M1374.3 183.2L1372.4 182.3M1375.2 181.6L1373.4 180.6M1376.2 180.1L1374.5 178.9M1377.3 178.7L1375.7 177.4M1378.6 177.3L1377.1 175.9M1380.0 176.1L1378.6 174.6M1381.5 175.0L1380.3 173.4M1383.0 174.1L1382.0 172.3M1384.7 173.2L1383.8 171.4M1386.4 172.5L1385.7 170.7M1388.2 172.0L1387.7 170.1M1390.1 171.6L1389.7 169.6M1391.9 171.4L1391.7 169.4" stroke="#9a9a9a" stroke-width="0.5" opacity="0.75"/>
<circle cx="1393.8" cy="192.89999999999998" r="21.7" fill="url(#greyk)" stroke="#6e6e6a" stroke-width="0.8"/>
<text x="1394.0" y="227.9" font-size="10" text-anchor="middle" font-family="Liberation Sans, Arial, sans-serif" fill="#141414" stroke="#141414" stroke-width="0.18" letter-spacing="0.2">ECHO</text>
<use href="#spkL" x="1358.9" y="220.4"/>
<use href="#spkR" x="1417.5" y="220.4"/>
<path d="M1481.59 166.81 L1482.76 167.08 L1483.91 167.43 L1485.04 167.83 L1486.15 168.29 L1487.24 168.81 L1488.31 169.37 L1489.35 169.99 L1490.36 170.66 L1491.34 171.37 L1492.29 172.13 L1493.20 172.94 L1494.08 173.79 L1494.92 174.68 L1495.72 175.60 L1496.45 176.58 L1497.13 177.61 L1497.76 178.66 L1498.33 179.74 L1498.86 180.84 L1499.34 181.97 L1499.77 183.12 L1500.14 184.29 L1500.45 185.47 L1500.72 186.67 L1500.93 187.87 L1501.08 189.09 L1501.17 190.31 L1501.21 191.53 L1501.20 192.75 L1501.13 193.97 L1501.00 195.19 L1500.81 196.40 L1500.58 197.60 L1500.28 198.78 L1499.93 199.96 L1499.53 201.11 L1499.08 202.24 L1498.57 203.36 L1498.02 204.44 L1497.41 205.50 L1496.76 206.53 L1496.06 207.53 L1495.32 208.50 L1494.53 209.43 L1493.71 210.32 L1492.84 211.17 L1491.93 211.99 L1490.99 212.76 L1489.93 211.43 L1490.80 210.69 L1491.63 209.91 L1492.43 209.10 L1493.18 208.25 L1493.90 207.37 L1494.58 206.46 L1495.22 205.52 L1495.81 204.55 L1496.35 203.56 L1496.86 202.54 L1497.31 201.50 L1497.72 200.44 L1498.07 199.37 L1498.38 198.28 L1498.64 197.18 L1498.85 196.07 L1499.01 194.94 L1499.12 193.82 L1499.18 192.69 L1499.18 191.56 L1499.13 190.43 L1499.04 189.30 L1498.89 188.18 L1498.69 187.07 L1498.44 185.97 L1498.14 184.88 L1497.80 183.80 L1497.40 182.74 L1496.96 181.70 L1496.47 180.69 L1495.93 179.69 L1495.35 178.72 L1494.73 177.78 L1494.08 176.86 L1493.40 175.95 L1492.69 175.07 L1491.93 174.22 L1491.14 173.41 L1490.30 172.63 L1489.44 171.89 L1488.53 171.18 L1487.60 170.52 L1486.63 169.89 L1485.64 169.31 L1484.62 168.77 L1483.58 168.27 L1482.51 167.82 L1481.43 167.39Z" fill="#0b0b0b"/>
<path d="M1467.21 166.81 L1466.04 167.08 L1464.89 167.43 L1463.76 167.83 L1462.65 168.29 L1461.56 168.81 L1460.49 169.37 L1459.45 169.99 L1458.44 170.66 L1457.46 171.37 L1456.51 172.13 L1455.60 172.94 L1454.72 173.79 L1453.88 174.68 L1453.08 175.60 L1452.35 176.58 L1451.67 177.61 L1451.04 178.66 L1450.47 179.74 L1449.94 180.84 L1449.46 181.97 L1449.03 183.12 L1448.66 184.29 L1448.35 185.47 L1448.08 186.67 L1447.87 187.87 L1447.72 189.09 L1447.63 190.31 L1447.59 191.53 L1447.60 192.75 L1447.67 193.97 L1447.80 195.19 L1447.99 196.40 L1448.22 197.60 L1448.52 198.78 L1448.87 199.96 L1449.27 201.11 L1449.72 202.24 L1450.23 203.36 L1450.78 204.44 L1451.39 205.50 L1452.04 206.53 L1452.74 207.53 L1453.48 208.50 L1454.27 209.43 L1455.09 210.32 L1455.96 211.17 L1456.87 211.99 L1457.81 212.76 L1458.87 211.43 L1458.00 210.69 L1457.17 209.91 L1456.37 209.10 L1455.62 208.25 L1454.90 207.37 L1454.22 206.46 L1453.58 205.52 L1452.99 204.55 L1452.45 203.56 L1451.94 202.54 L1451.49 201.50 L1451.08 200.44 L1450.73 199.37 L1450.42 198.28 L1450.16 197.18 L1449.95 196.07 L1449.79 194.94 L1449.68 193.82 L1449.62 192.69 L1449.62 191.56 L1449.67 190.43 L1449.76 189.30 L1449.91 188.18 L1450.11 187.07 L1450.36 185.97 L1450.66 184.88 L1451.00 183.80 L1451.40 182.74 L1451.84 181.70 L1452.33 180.69 L1452.87 179.69 L1453.45 178.72 L1454.07 177.78 L1454.72 176.86 L1455.40 175.95 L1456.11 175.07 L1456.87 174.22 L1457.66 173.41 L1458.50 172.63 L1459.36 171.89 L1460.27 171.18 L1461.20 170.52 L1462.17 169.89 L1463.16 169.31 L1464.18 168.77 L1465.22 168.27 L1466.29 167.82 L1467.37 167.39Z" fill="#0b0b0b"/>
<ellipse cx="1474.4" cy="191.9" rx="23.9" ry="22.9" fill="#161616"/>
<path d="M1474.4 171.3L1474.4 169.3M1476.3 171.4L1476.5 169.4M1478.1 171.6L1478.5 169.6M1480.0 172.0L1480.5 170.1M1481.8 172.5L1482.5 170.7M1483.5 173.2L1484.4 171.4M1485.2 174.1L1486.2 172.3M1486.7 175.0L1487.9 173.4M1488.2 176.1L1489.6 174.6M1489.6 177.3L1491.1 175.9M1490.9 178.7L1492.5 177.4M1492.0 180.1L1493.7 178.9M1493.0 181.6L1494.8 180.6M1493.9 183.2L1495.8 182.3M1494.6 184.9L1496.6 184.2M1495.2 186.6L1497.2 186.1M1495.6 188.3L1497.6 188.0M1495.8 190.1L1497.9 189.9M1495.9 191.9L1498.0 191.9M1495.8 193.7L1497.9 193.9M1495.6 195.5L1497.6 195.8M1495.2 197.2L1497.2 197.7M1494.6 198.9L1496.6 199.6M1493.9 200.6L1495.8 201.5M1493.0 202.2L1494.8 203.2M1492.0 203.7L1493.7 204.9M1490.9 205.1L1492.5 206.4M1489.6 206.5L1491.1 207.9M1488.2 207.7L1489.6 209.2M1486.7 208.8L1487.9 210.4M1485.2 209.7L1486.2 211.5M1483.5 210.6L1484.4 212.4M1481.8 211.3L1482.5 213.1M1480.0 211.8L1480.5 213.7M1478.1 212.2L1478.5 214.2M1476.3 212.4L1476.5 214.4M1474.4 212.5L1474.4 214.5M1472.5 212.4L1472.3 214.4M1470.7 212.2L1470.3 214.2M1468.8 211.8L1468.3 213.7M1467.0 211.3L1466.3 213.1M1465.3 210.6L1464.4 212.4M1463.7 209.7L1462.6 211.5M1462.1 208.8L1460.9 210.4M1460.6 207.7L1459.2 209.2M1459.2 206.5L1457.7 207.9M1457.9 205.1L1456.3 206.4M1456.8 203.7L1455.1 204.9M1455.8 202.2L1454.0 203.2M1454.9 200.6L1453.0 201.5M1454.2 198.9L1452.2 199.6M1453.6 197.2L1451.6 197.7M1453.2 195.5L1451.2 195.8M1453.0 193.7L1450.9 193.9M1452.9 191.9L1450.8 191.9M1453.0 190.1L1450.9 189.9M1453.2 188.3L1451.2 188.0M1453.6 186.6L1451.6 186.1M1454.2 184.9L1452.2 184.2M1454.9 183.2L1453.0 182.3M1455.8 181.6L1454.0 180.6M1456.8 180.1L1455.1 178.9M1457.9 178.7L1456.3 177.4M1459.2 177.3L1457.7 175.9M1460.6 176.1L1459.2 174.6M1462.1 175.0L1460.9 173.4M1463.7 174.1L1462.6 172.3M1465.3 173.2L1464.4 171.4M1467.0 172.5L1466.3 170.7M1468.8 172.0L1468.3 170.1M1470.7 171.6L1470.3 169.6M1472.5 171.4L1472.3 169.4" stroke="#9a9a9a" stroke-width="0.5" opacity="0.75"/>
<circle cx="1474.4" cy="192.89999999999998" r="21.7" fill="url(#greyk)" stroke="#6e6e6a" stroke-width="0.8"/>
<text x="1474.6000000000001" y="227.9" font-size="10" text-anchor="middle" font-family="Liberation Sans, Arial, sans-serif" fill="#141414" stroke="#141414" stroke-width="0.18" letter-spacing="0.2">REVERB</text>
<use href="#spkL" x="1441.7" y="220.4"/>
<use href="#spkR" x="1496.3" y="220.4"/>
<path d="M1562.19 166.81 L1563.36 167.08 L1564.51 167.43 L1565.64 167.83 L1566.75 168.29 L1567.84 168.81 L1568.91 169.37 L1569.95 169.99 L1570.96 170.66 L1571.94 171.37 L1572.89 172.13 L1573.80 172.94 L1574.68 173.79 L1575.52 174.68 L1576.32 175.60 L1577.05 176.58 L1577.73 177.61 L1578.36 178.66 L1578.93 179.74 L1579.46 180.84 L1579.94 181.97 L1580.37 183.12 L1580.74 184.29 L1581.05 185.47 L1581.32 186.67 L1581.53 187.87 L1581.68 189.09 L1581.77 190.31 L1581.81 191.53 L1581.80 192.75 L1581.73 193.97 L1581.60 195.19 L1581.41 196.40 L1581.18 197.60 L1580.88 198.78 L1580.53 199.96 L1580.13 201.11 L1579.68 202.24 L1579.17 203.36 L1578.62 204.44 L1578.01 205.50 L1577.36 206.53 L1576.66 207.53 L1575.92 208.50 L1575.13 209.43 L1574.31 210.32 L1573.44 211.17 L1572.53 211.99 L1571.59 212.76 L1570.53 211.43 L1571.40 210.69 L1572.23 209.91 L1573.03 209.10 L1573.78 208.25 L1574.50 207.37 L1575.18 206.46 L1575.82 205.52 L1576.41 204.55 L1576.95 203.56 L1577.46 202.54 L1577.91 201.50 L1578.32 200.44 L1578.67 199.37 L1578.98 198.28 L1579.24 197.18 L1579.45 196.07 L1579.61 194.94 L1579.72 193.82 L1579.78 192.69 L1579.78 191.56 L1579.73 190.43 L1579.64 189.30 L1579.49 188.18 L1579.29 187.07 L1579.04 185.97 L1578.74 184.88 L1578.40 183.80 L1578.00 182.74 L1577.56 181.70 L1577.07 180.69 L1576.53 179.69 L1575.95 178.72 L1575.33 177.78 L1574.68 176.86 L1574.00 175.95 L1573.29 175.07 L1572.53 174.22 L1571.74 173.41 L1570.90 172.63 L1570.04 171.89 L1569.13 171.18 L1568.20 170.52 L1567.23 169.89 L1566.24 169.31 L1565.22 168.77 L1564.18 168.27 L1563.11 167.82 L1562.03 167.39Z" fill="#0b0b0b"/>
<path d="M1547.81 166.81 L1546.64 167.08 L1545.49 167.43 L1544.36 167.83 L1543.25 168.29 L1542.16 168.81 L1541.09 169.37 L1540.05 169.99 L1539.04 170.66 L1538.06 171.37 L1537.11 172.13 L1536.20 172.94 L1535.32 173.79 L1534.48 174.68 L1533.68 175.60 L1532.95 176.58 L1532.27 177.61 L1531.64 178.66 L1531.07 179.74 L1530.54 180.84 L1530.06 181.97 L1529.63 183.12 L1529.26 184.29 L1528.95 185.47 L1528.68 186.67 L1528.47 187.87 L1528.32 189.09 L1528.23 190.31 L1528.19 191.53 L1528.20 192.75 L1528.27 193.97 L1528.40 195.19 L1528.59 196.40 L1528.82 197.60 L1529.12 198.78 L1529.47 199.96 L1529.87 201.11 L1530.32 202.24 L1530.83 203.36 L1531.38 204.44 L1531.99 205.50 L1532.64 206.53 L1533.34 207.53 L1534.08 208.50 L1534.87 209.43 L1535.69 210.32 L1536.56 211.17 L1537.47 211.99 L1538.41 212.76 L1539.47 211.43 L1538.60 210.69 L1537.77 209.91 L1536.97 209.10 L1536.22 208.25 L1535.50 207.37 L1534.82 206.46 L1534.18 205.52 L1533.59 204.55 L1533.05 203.56 L1532.54 202.54 L1532.09 201.50 L1531.68 200.44 L1531.33 199.37 L1531.02 198.28 L1530.76 197.18 L1530.55 196.07 L1530.39 194.94 L1530.28 193.82 L1530.22 192.69 L1530.22 191.56 L1530.27 190.43 L1530.36 189.30 L1530.51 188.18 L1530.71 187.07 L1530.96 185.97 L1531.26 184.88 L1531.60 183.80 L1532.00 182.74 L1532.44 181.70 L1532.93 180.69 L1533.47 179.69 L1534.05 178.72 L1534.67 177.78 L1535.32 176.86 L1536.00 175.95 L1536.71 175.07 L1537.47 174.22 L1538.26 173.41 L1539.10 172.63 L1539.96 171.89 L1540.87 171.18 L1541.80 170.52 L1542.77 169.89 L1543.76 169.31 L1544.78 168.77 L1545.82 168.27 L1546.89 167.82 L1547.97 167.39Z" fill="#0b0b0b"/>
<ellipse cx="1555" cy="191.9" rx="23.9" ry="22.9" fill="#161616"/>
<path d="M1555.0 171.3L1555.0 169.3M1556.9 171.4L1557.1 169.4M1558.7 171.6L1559.1 169.6M1560.6 172.0L1561.1 170.1M1562.4 172.5L1563.1 170.7M1564.1 173.2L1565.0 171.4M1565.8 174.1L1566.8 172.3M1567.3 175.0L1568.5 173.4M1568.8 176.1L1570.2 174.6M1570.2 177.3L1571.7 175.9M1571.5 178.7L1573.1 177.4M1572.6 180.1L1574.3 178.9M1573.6 181.6L1575.4 180.6M1574.5 183.2L1576.4 182.3M1575.2 184.9L1577.2 184.2M1575.8 186.6L1577.8 186.1M1576.2 188.3L1578.2 188.0M1576.4 190.1L1578.5 189.9M1576.5 191.9L1578.6 191.9M1576.4 193.7L1578.5 193.9M1576.2 195.5L1578.2 195.8M1575.8 197.2L1577.8 197.7M1575.2 198.9L1577.2 199.6M1574.5 200.6L1576.4 201.5M1573.6 202.2L1575.4 203.2M1572.6 203.7L1574.3 204.9M1571.5 205.1L1573.1 206.4M1570.2 206.5L1571.7 207.9M1568.8 207.7L1570.2 209.2M1567.3 208.8L1568.5 210.4M1565.8 209.7L1566.8 211.5M1564.1 210.6L1565.0 212.4M1562.4 211.3L1563.1 213.1M1560.6 211.8L1561.1 213.7M1558.7 212.2L1559.1 214.2M1556.9 212.4L1557.1 214.4M1555.0 212.5L1555.0 214.5M1553.1 212.4L1552.9 214.4M1551.3 212.2L1550.9 214.2M1549.4 211.8L1548.9 213.7M1547.6 211.3L1546.9 213.1M1545.9 210.6L1545.0 212.4M1544.2 209.7L1543.2 211.5M1542.7 208.8L1541.5 210.4M1541.2 207.7L1539.8 209.2M1539.8 206.5L1538.3 207.9M1538.5 205.1L1536.9 206.4M1537.4 203.7L1535.7 204.9M1536.4 202.2L1534.6 203.2M1535.5 200.6L1533.6 201.5M1534.8 198.9L1532.8 199.6M1534.2 197.2L1532.2 197.7M1533.8 195.5L1531.8 195.8M1533.6 193.7L1531.5 193.9M1533.5 191.9L1531.4 191.9M1533.6 190.1L1531.5 189.9M1533.8 188.3L1531.8 188.0M1534.2 186.6L1532.2 186.1M1534.8 184.9L1532.8 184.2M1535.5 183.2L1533.6 182.3M1536.4 181.6L1534.6 180.6M1537.4 180.1L1535.7 178.9M1538.5 178.7L1536.9 177.4M1539.8 177.3L1538.3 175.9M1541.2 176.1L1539.8 174.6M1542.7 175.0L1541.5 173.4M1544.2 174.1L1543.2 172.3M1545.9 173.2L1545.0 171.4M1547.6 172.5L1546.9 170.7M1549.4 172.0L1548.9 170.1M1551.3 171.6L1550.9 169.6M1553.1 171.4L1552.9 169.4" stroke="#9a9a9a" stroke-width="0.5" opacity="0.75"/>
<circle cx="1555" cy="192.89999999999998" r="21.7" fill="url(#greyk)" stroke="#6e6e6a" stroke-width="0.8"/>
<text x="1555.2" y="227.9" font-size="10" text-anchor="middle" font-family="Liberation Sans, Arial, sans-serif" fill="#141414" stroke="#141414" stroke-width="0.18" letter-spacing="0.2">MIC</text>
<use href="#spkL" x="1524.2" y="220.4"/>
<use href="#spkR" x="1575.1" y="220.4"/>
<path d="M1642.59 166.81 L1643.76 167.08 L1644.91 167.43 L1646.04 167.83 L1647.15 168.29 L1648.24 168.81 L1649.31 169.37 L1650.35 169.99 L1651.36 170.66 L1652.34 171.37 L1653.29 172.13 L1654.20 172.94 L1655.08 173.79 L1655.92 174.68 L1656.72 175.60 L1657.45 176.58 L1658.13 177.61 L1658.76 178.66 L1659.33 179.74 L1659.86 180.84 L1660.34 181.97 L1660.77 183.12 L1661.14 184.29 L1661.45 185.47 L1661.72 186.67 L1661.93 187.87 L1662.08 189.09 L1662.17 190.31 L1662.21 191.53 L1662.20 192.75 L1662.13 193.97 L1662.00 195.19 L1661.81 196.40 L1661.58 197.60 L1661.28 198.78 L1660.93 199.96 L1660.53 201.11 L1660.08 202.24 L1659.57 203.36 L1659.02 204.44 L1658.41 205.50 L1657.76 206.53 L1657.06 207.53 L1656.32 208.50 L1655.53 209.43 L1654.71 210.32 L1653.84 211.17 L1652.93 211.99 L1651.99 212.76 L1650.93 211.43 L1651.80 210.69 L1652.63 209.91 L1653.43 209.10 L1654.18 208.25 L1654.90 207.37 L1655.58 206.46 L1656.22 205.52 L1656.81 204.55 L1657.35 203.56 L1657.86 202.54 L1658.31 201.50 L1658.72 200.44 L1659.07 199.37 L1659.38 198.28 L1659.64 197.18 L1659.85 196.07 L1660.01 194.94 L1660.12 193.82 L1660.18 192.69 L1660.18 191.56 L1660.13 190.43 L1660.04 189.30 L1659.89 188.18 L1659.69 187.07 L1659.44 185.97 L1659.14 184.88 L1658.80 183.80 L1658.40 182.74 L1657.96 181.70 L1657.47 180.69 L1656.93 179.69 L1656.35 178.72 L1655.73 177.78 L1655.08 176.86 L1654.40 175.95 L1653.69 175.07 L1652.93 174.22 L1652.14 173.41 L1651.30 172.63 L1650.44 171.89 L1649.53 171.18 L1648.60 170.52 L1647.63 169.89 L1646.64 169.31 L1645.62 168.77 L1644.58 168.27 L1643.51 167.82 L1642.43 167.39Z" fill="#0b0b0b"/>
<path d="M1628.21 166.81 L1627.04 167.08 L1625.89 167.43 L1624.76 167.83 L1623.65 168.29 L1622.56 168.81 L1621.49 169.37 L1620.45 169.99 L1619.44 170.66 L1618.46 171.37 L1617.51 172.13 L1616.60 172.94 L1615.72 173.79 L1614.88 174.68 L1614.08 175.60 L1613.35 176.58 L1612.67 177.61 L1612.04 178.66 L1611.47 179.74 L1610.94 180.84 L1610.46 181.97 L1610.03 183.12 L1609.66 184.29 L1609.35 185.47 L1609.08 186.67 L1608.87 187.87 L1608.72 189.09 L1608.63 190.31 L1608.59 191.53 L1608.60 192.75 L1608.67 193.97 L1608.80 195.19 L1608.99 196.40 L1609.22 197.60 L1609.52 198.78 L1609.87 199.96 L1610.27 201.11 L1610.72 202.24 L1611.23 203.36 L1611.78 204.44 L1612.39 205.50 L1613.04 206.53 L1613.74 207.53 L1614.48 208.50 L1615.27 209.43 L1616.09 210.32 L1616.96 211.17 L1617.87 211.99 L1618.81 212.76 L1619.87 211.43 L1619.00 210.69 L1618.17 209.91 L1617.37 209.10 L1616.62 208.25 L1615.90 207.37 L1615.22 206.46 L1614.58 205.52 L1613.99 204.55 L1613.45 203.56 L1612.94 202.54 L1612.49 201.50 L1612.08 200.44 L1611.73 199.37 L1611.42 198.28 L1611.16 197.18 L1610.95 196.07 L1610.79 194.94 L1610.68 193.82 L1610.62 192.69 L1610.62 191.56 L1610.67 190.43 L1610.76 189.30 L1610.91 188.18 L1611.11 187.07 L1611.36 185.97 L1611.66 184.88 L1612.00 183.80 L1612.40 182.74 L1612.84 181.70 L1613.33 180.69 L1613.87 179.69 L1614.45 178.72 L1615.07 177.78 L1615.72 176.86 L1616.40 175.95 L1617.11 175.07 L1617.87 174.22 L1618.66 173.41 L1619.50 172.63 L1620.36 171.89 L1621.27 171.18 L1622.20 170.52 L1623.17 169.89 L1624.16 169.31 L1625.18 168.77 L1626.22 168.27 L1627.29 167.82 L1628.37 167.39Z" fill="#0b0b0b"/>
<ellipse cx="1635.4" cy="191.9" rx="23.9" ry="22.9" fill="#161616"/>
<path d="M1635.4 171.3L1635.4 169.3M1637.3 171.4L1637.5 169.4M1639.1 171.6L1639.5 169.6M1641.0 172.0L1641.5 170.1M1642.8 172.5L1643.5 170.7M1644.5 173.2L1645.4 171.4M1646.2 174.1L1647.2 172.3M1647.7 175.0L1648.9 173.4M1649.2 176.1L1650.6 174.6M1650.6 177.3L1652.1 175.9M1651.9 178.7L1653.5 177.4M1653.0 180.1L1654.7 178.9M1654.0 181.6L1655.8 180.6M1654.9 183.2L1656.8 182.3M1655.6 184.9L1657.6 184.2M1656.2 186.6L1658.2 186.1M1656.6 188.3L1658.6 188.0M1656.8 190.1L1658.9 189.9M1656.9 191.9L1659.0 191.9M1656.8 193.7L1658.9 193.9M1656.6 195.5L1658.6 195.8M1656.2 197.2L1658.2 197.7M1655.6 198.9L1657.6 199.6M1654.9 200.6L1656.8 201.5M1654.0 202.2L1655.8 203.2M1653.0 203.7L1654.7 204.9M1651.9 205.1L1653.5 206.4M1650.6 206.5L1652.1 207.9M1649.2 207.7L1650.6 209.2M1647.7 208.8L1648.9 210.4M1646.2 209.7L1647.2 211.5M1644.5 210.6L1645.4 212.4M1642.8 211.3L1643.5 213.1M1641.0 211.8L1641.5 213.7M1639.1 212.2L1639.5 214.2M1637.3 212.4L1637.5 214.4M1635.4 212.5L1635.4 214.5M1633.5 212.4L1633.3 214.4M1631.7 212.2L1631.3 214.2M1629.8 211.8L1629.3 213.7M1628.0 211.3L1627.3 213.1M1626.3 210.6L1625.4 212.4M1624.7 209.7L1623.6 211.5M1623.1 208.8L1621.9 210.4M1621.6 207.7L1620.2 209.2M1620.2 206.5L1618.7 207.9M1618.9 205.1L1617.3 206.4M1617.8 203.7L1616.1 204.9M1616.8 202.2L1615.0 203.2M1615.9 200.6L1614.0 201.5M1615.2 198.9L1613.2 199.6M1614.6 197.2L1612.6 197.7M1614.2 195.5L1612.2 195.8M1614.0 193.7L1611.9 193.9M1613.9 191.9L1611.8 191.9M1614.0 190.1L1611.9 189.9M1614.2 188.3L1612.2 188.0M1614.6 186.6L1612.6 186.1M1615.2 184.9L1613.2 184.2M1615.9 183.2L1614.0 182.3M1616.8 181.6L1615.0 180.6M1617.8 180.1L1616.1 178.9M1618.9 178.7L1617.3 177.4M1620.2 177.3L1618.7 175.9M1621.6 176.1L1620.2 174.6M1623.1 175.0L1621.9 173.4M1624.7 174.1L1623.6 172.3M1626.3 173.2L1625.4 171.4M1628.0 172.5L1627.3 170.7M1629.8 172.0L1629.3 170.1M1631.7 171.6L1631.3 169.6M1633.5 171.4L1633.3 169.4" stroke="#9a9a9a" stroke-width="0.5" opacity="0.75"/>
<circle cx="1635.4" cy="192.89999999999998" r="21.7" fill="url(#greyk)" stroke="#6e6e6a" stroke-width="0.8"/>
<text x="1635.6000000000001" y="227.9" font-size="10" text-anchor="middle" font-family="Liberation Sans, Arial, sans-serif" fill="#141414" stroke="#141414" stroke-width="0.18" letter-spacing="0.2">Music</text>
<use href="#spkL" x="1605" y="220.4"/>
<use href="#spkR" x="1655.3" y="220.4"/>
<path d="M211.3 304.5 V287.5 Q211.3 285 213.8 285 H271.3 M318.8 285 H377.5 Q380 285 380 287.5 V304.5 M267.5 289.5 V304.5 M323 289.5 V304.5" fill="none" stroke="#d4d4d0" stroke-width="0.9"/>
<text transform="translate(282 288) scale(0.74 1)" font-size="8.8" textLength="36.9" lengthAdjust="spacing" text-rendering="geometricPrecision" font-family="Liberation Serif, Times New Roman, serif" fill="#d4d4d0">MIC IN</text>
<text transform="translate(211.3 316.3) scale(0.74 1)" font-size="8.8" text-anchor="middle" text-rendering="geometricPrecision" font-family="Liberation Serif, Times New Roman, serif" fill="#d4d4d0">1</text>
<text transform="translate(268.8 316.3) scale(0.74 1)" font-size="8.8" text-anchor="middle" text-rendering="geometricPrecision" font-family="Liberation Serif, Times New Roman, serif" fill="#d4d4d0">2</text>
<text transform="translate(323.8 316.3) scale(0.74 1)" font-size="8.8" text-anchor="middle" text-rendering="geometricPrecision" font-family="Liberation Serif, Times New Roman, serif" fill="#d4d4d0">3</text>
<text transform="translate(380.0 316.3) scale(0.74 1)" font-size="8.8" text-anchor="middle" text-rendering="geometricPrecision" font-family="Liberation Serif, Times New Roman, serif" fill="#d4d4d0">4</text>
<circle cx="212.8" cy="348" r="22" fill="#0a0a0b" stroke="#b4b4bc" stroke-width="0.7"/>
<circle cx="212.8" cy="348" r="19.6" fill="none" stroke="#19191c" stroke-width="1.6"/>
<circle cx="213.0" cy="347.8" r="16.6" fill="url(#goldring)"/>
<circle cx="213.0" cy="347.8" r="16.6" fill="none" stroke="#1a1208" stroke-width="1"/>
<circle cx="213.4" cy="346.7" r="12.1" fill="#080604"/>
<path d="M213.3 340 V350" stroke="#2c2414" stroke-width="0.8"/>
<circle cx="268.2" cy="348" r="22" fill="#0a0a0b" stroke="#b4b4bc" stroke-width="0.7"/>
<circle cx="268.2" cy="348" r="19.6" fill="none" stroke="#19191c" stroke-width="1.6"/>
<circle cx="268.4" cy="347.8" r="16.6" fill="url(#goldring)"/>
<circle cx="268.4" cy="347.8" r="16.6" fill="none" stroke="#1a1208" stroke-width="1"/>
<circle cx="268.8" cy="346.7" r="12.1" fill="#080604"/>
<path d="M268.7 340 V350" stroke="#2c2414" stroke-width="0.8"/>
<circle cx="323.4" cy="348" r="22" fill="#0a0a0b" stroke="#b4b4bc" stroke-width="0.7"/>
<circle cx="323.4" cy="348" r="19.6" fill="none" stroke="#19191c" stroke-width="1.6"/>
<circle cx="323.59999999999997" cy="347.8" r="16.6" fill="url(#goldring)"/>
<circle cx="323.59999999999997" cy="347.8" r="16.6" fill="none" stroke="#1a1208" stroke-width="1"/>
<circle cx="324.0" cy="346.7" r="12.1" fill="#080604"/>
<path d="M323.9 340 V350" stroke="#2c2414" stroke-width="0.8"/>
<circle cx="378.8" cy="348" r="22" fill="#0a0a0b" stroke="#b4b4bc" stroke-width="0.7"/>
<circle cx="378.8" cy="348" r="19.6" fill="none" stroke="#19191c" stroke-width="1.6"/>
<circle cx="379.0" cy="347.8" r="16.6" fill="url(#goldring)"/>
<circle cx="379.0" cy="347.8" r="16.6" fill="none" stroke="#1a1208" stroke-width="1"/>
<circle cx="379.40000000000003" cy="346.7" r="12.1" fill="#080604"/>
<path d="M379.3 340 V350" stroke="#2c2414" stroke-width="0.8"/>
<path d="M142.5 336 A14 14 0 0 1 142.5 364" fill="#343434" stroke="#1c1c1c" stroke-width="1"/>
<use href="#screw7" x="141.3" y="350"/>
<path d="M1700 337 A14 14 0 0 0 1700 365.5" fill="#313131" stroke="#161616" stroke-width="1"/>
<use href="#screw7" x="1701.3" y="351.3"/>
<path d="M906 264 A15.4 15.4 0 0 0 936.6 264" fill="#333434" stroke="#1c1c1c" stroke-width="1"/>
<use href="#screw7" transform="translate(921.3 263.6) scale(1.14)"/>
<path d="M443.8 278.5 H434.5 V397.5" fill="none" stroke="#d4d4d0" stroke-width="0.9" stroke-dasharray="3 1.6"/>
<path d="M434.5 397.5 H495 M560 397.5 H624.5" fill="none" stroke="#d4d4d0" stroke-width="0.9"/>
<path d="M615.5 278.5 H624.5 V397.5" fill="none" stroke="#d4d4d0" stroke-width="0.9" stroke-dasharray="3 1.6"/>
<path d="M510.5 278.5 V391" fill="none" stroke="#d4d4d0" stroke-width="0.9" stroke-dasharray="3 1.6"/>
<path d="M568.5 278.5 V297 M568.5 306 V313 M568.5 331 V352 M568.5 362 V391" fill="none" stroke="#d4d4d0" stroke-width="0.9" stroke-dasharray="3 1.6"/>
<text transform="translate(503.8 401.3) scale(0.74 1)" font-size="8.8" textLength="67.6" lengthAdjust="spacing" text-rendering="geometricPrecision" font-family="Liberation Serif, Times New Roman, serif" fill="#d4d4d0">AUDIO INPUT</text>
<text transform="translate(463.8 320) scale(0.74 1)" font-size="8.8" textLength="43.9" lengthAdjust="spacing" text-rendering="geometricPrecision" font-family="Liberation Serif, Times New Roman, serif" fill="#d4d4d0">COAXIAL</text>
<text transform="translate(460 387.6) scale(0.74 1)" font-size="8.8" textLength="45.0" lengthAdjust="spacing" text-rendering="geometricPrecision" font-family="Liberation Serif, Times New Roman, serif" fill="#d4d4d0">OPTICAL</text>
<text transform="translate(536.3 387.6) scale(0.74 1)" font-size="8.8" textLength="15.8" lengthAdjust="spacing" text-rendering="geometricPrecision" font-family="Liberation Serif, Times New Roman, serif" fill="#d4d4d0">IN1</text>
<text transform="translate(589.3 387.6) scale(0.74 1)" font-size="8.8" textLength="17.8" lengthAdjust="spacing" text-rendering="geometricPrecision" font-family="Liberation Serif, Times New Roman, serif" fill="#d4d4d0">IN2</text>
<text transform="translate(568.2 304) scale(0.74 1)" font-size="7.6" text-anchor="middle" text-rendering="geometricPrecision" font-family="Liberation Serif, Times New Roman, serif" fill="#d4d4d0">L</text>
<text transform="translate(568.2 360) scale(0.74 1)" font-size="7.6" text-anchor="middle" text-rendering="geometricPrecision" font-family="Liberation Serif, Times New Roman, serif" fill="#d4d4d0">R</text>
<circle cx="476.3" cy="288.1" r="17.7" fill="#131313"/>
<circle cx="476.3" cy="287.6" r="17.0" fill="url(#silver)"/>
<circle cx="476.3" cy="287.6" r="16.5" fill="none" stroke="url(#rimsh)" stroke-width="1.4"/>
<circle cx="476.5" cy="287.8" r="12.8" fill="url(#groove)"/>
<circle cx="476.3" cy="287.6" r="11.7" fill="url(#lip)"/>
<circle cx="476.40000000000003" cy="287.6" r="11.1" fill="url(#oins)"/>
<circle cx="476.3" cy="287.6" r="14.1" fill="none" stroke="#000" stroke-width="5.9" stroke-opacity="0.28"/>
<circle cx="476.6" cy="287.3" r="5.9" fill="#0e0705"/>
<use href="#screw7" x="449.5" y="312.5" transform="translate(449.5 312.5) scale(0.95) translate(-449.5 -312.5)"/>
<rect x="457" y="327" width="39.4" height="42.4" fill="#0b0b0b" stroke="#2e2e2e" stroke-width="0.8"/>
<path d="M463.2 330.2 H488.6 V352 L487 364.4 H465.6 L463.2 352 Z" fill="#adadad"/>
<rect x="463.2" y="330.2" width="25.4" height="8.8" fill="#c9c9c9"/>
<path d="M469.8 364.4 V341 Q469.8 339 471.8 339 H482.6 Q484.6 339 484.6 341 V364.4 Z" fill="#d6d6d6" stroke="#8c8c8c" stroke-width="0.7"/>
<path d="M476 346 V360" stroke="#bdbdbd" stroke-width="1.2"/>
<rect x="460.2" y="346" width="3" height="7" fill="#1c1c1c"/><rect x="488.6" y="346" width="3" height="7" fill="#1c1c1c"/>
<circle cx="541.9" cy="296.1" r="21.5" fill="#131313"/>
<circle cx="541.9" cy="295.6" r="20.8" fill="url(#silver)"/>
<circle cx="541.9" cy="295.6" r="20.3" fill="none" stroke="url(#rimsh)" stroke-width="1.4"/>
<circle cx="542.1" cy="295.8" r="15.6" fill="url(#groove)"/>
<circle cx="541.9" cy="295.6" r="14.3" fill="url(#lip)"/>
<circle cx="542.0" cy="295.6" r="11.7" fill="url(#wins)"/>
<circle cx="542.1999999999999" cy="295.3" r="7.4" fill="#0e0705"/>
<circle cx="541.9" cy="350.1" r="21.5" fill="#131313"/>
<circle cx="541.9" cy="349.6" r="20.8" fill="url(#silver)"/>
<circle cx="541.9" cy="349.6" r="20.3" fill="none" stroke="url(#rimsh)" stroke-width="1.4"/>
<circle cx="542.1" cy="349.8" r="15.6" fill="url(#groove)"/>
<circle cx="541.9" cy="349.6" r="14.3" fill="url(#lip)"/>
<circle cx="542.0" cy="349.6" r="13.6" fill="#2c1a14"/>
<circle cx="542.0" cy="349.6" r="12.6" fill="url(#rins)"/>
<circle cx="542.1999999999999" cy="349.3" r="7.9" fill="#0e0705"/>
<circle cx="595.6" cy="296.1" r="21.5" fill="#131313"/>
<circle cx="595.6" cy="295.6" r="20.8" fill="url(#silver)"/>
<circle cx="595.6" cy="295.6" r="20.3" fill="none" stroke="url(#rimsh)" stroke-width="1.4"/>
<circle cx="595.8000000000001" cy="295.8" r="15.6" fill="url(#groove)"/>
<circle cx="595.6" cy="295.6" r="14.3" fill="url(#lip)"/>
<circle cx="595.7" cy="295.6" r="11.7" fill="url(#wins)"/>
<circle cx="595.9" cy="295.3" r="7.4" fill="#0e0705"/>
<circle cx="595.6" cy="350.1" r="21.5" fill="#131313"/>
<circle cx="595.6" cy="349.6" r="20.8" fill="url(#silver)"/>
<circle cx="595.6" cy="349.6" r="20.3" fill="none" stroke="url(#rimsh)" stroke-width="1.4"/>
<circle cx="595.8000000000001" cy="349.8" r="15.6" fill="url(#groove)"/>
<circle cx="595.6" cy="349.6" r="14.3" fill="url(#lip)"/>
<circle cx="595.7" cy="349.6" r="13.6" fill="#2c1a14"/>
<circle cx="595.7" cy="349.6" r="12.6" fill="url(#rins)"/>
<circle cx="595.9" cy="349.3" r="7.9" fill="#0e0705"/>
<use href="#screw7" x="568.2" y="321.8"/>
<path d="M638.8 278.5 H629.5 V397.5" fill="none" stroke="#d4d4d0" stroke-width="0.9" stroke-dasharray="3 1.6"/>
<path d="M629.5 397.5 H981.3 M1065.8 397.5 H1413.5" fill="none" stroke="#d4d4d0" stroke-width="0.9"/>
<text transform="translate(997.5 398) scale(0.74 1)" font-size="8.8" textLength="75.0" lengthAdjust="spacing" text-rendering="geometricPrecision" font-family="Liberation Serif, Times New Roman, serif" fill="#d4d4d0">AUDIO OUTPUT</text>
<circle cx="679.7" cy="326" r="41.8" fill="#131313" stroke="#b0b0bc" stroke-width="0.65"/>
<circle cx="679.7" cy="326" r="39.4" fill="none" stroke="#1d1d1d" stroke-width="2"/>
<circle cx="679.7" cy="326" r="36.4" fill="url(#xlbev)"/>
<circle cx="679.7" cy="325.8" r="31.3" fill="url(#xlrin)"/>
<circle cx="679.7" cy="325.8" r="31.3" fill="none" stroke="#0a0a0a" stroke-width="1.2"/>
<path d="M671.6 293.6 A33.4 33.4 0 0 1 687.8 293.6" fill="none" stroke="#4545ff" stroke-width="4.6" stroke-linecap="round" filter="url(#blur1)"/>
<path d="M671.6 293.6 A33.4 33.4 0 0 1 687.8 293.6" fill="none" stroke="#f6f6ff" stroke-width="2.6" stroke-linecap="round"/>
<rect x="650.3000000000001" y="316.4" width="3.6" height="8.6" fill="#080808"/><rect x="705.1" y="316.4" width="3.6" height="8.6" fill="#080808"/>
<rect x="675.3000000000001" y="343.6" width="8.2" height="9.4" rx="1" fill="#080808" stroke="#454545" stroke-width="0.9"/>
<ellipse cx="664.6000000000001" cy="322.0" rx="3.8" ry="5" fill="#181512"/>
<circle cx="665.4000000000001" cy="323.6" r="2.7" fill="url(#pin)"/>
<ellipse cx="693.0000000000001" cy="324.0" rx="3.8" ry="5" fill="#181512"/>
<circle cx="693.8000000000001" cy="325.6" r="2.7" fill="url(#pin)"/>
<ellipse cx="679.0000000000001" cy="338.7" rx="3.8" ry="5" fill="#181512"/>
<circle cx="679.8000000000001" cy="340.3" r="2.7" fill="url(#pin)"/>
<use href="#screw7" x="642.1" y="287.6"/>
<use href="#screw7" x="718.1" y="362.6"/>
<text transform="translate(680.0 387.6) scale(0.74 1)" font-size="8.8" text-anchor="middle" text-rendering="geometricPrecision" font-family="Liberation Serif, Times New Roman, serif" fill="#d4d4d0">R</text>
<circle cx="780.7" cy="326" r="41.8" fill="#131313" stroke="#b0b0bc" stroke-width="0.65"/>
<circle cx="780.7" cy="326" r="39.4" fill="none" stroke="#1d1d1d" stroke-width="2"/>
<circle cx="780.7" cy="326" r="36.4" fill="url(#xlbev)"/>
<circle cx="780.7" cy="325.8" r="31.3" fill="url(#xlrin)"/>
<circle cx="780.7" cy="325.8" r="31.3" fill="none" stroke="#0a0a0a" stroke-width="1.2"/>
<path d="M772.6 293.6 A33.4 33.4 0 0 1 788.8 293.6" fill="none" stroke="#4545ff" stroke-width="4.6" stroke-linecap="round" filter="url(#blur1)"/>
<path d="M772.6 293.6 A33.4 33.4 0 0 1 788.8 293.6" fill="none" stroke="#f6f6ff" stroke-width="2.6" stroke-linecap="round"/>
<rect x="751.3000000000001" y="316.4" width="3.6" height="8.6" fill="#080808"/><rect x="806.1" y="316.4" width="3.6" height="8.6" fill="#080808"/>
<rect x="776.3000000000001" y="343.6" width="8.2" height="9.4" rx="1" fill="#080808" stroke="#454545" stroke-width="0.9"/>
<ellipse cx="765.6000000000001" cy="322.0" rx="3.8" ry="5" fill="#181512"/>
<circle cx="766.4000000000001" cy="323.6" r="2.7" fill="url(#pin)"/>
<ellipse cx="794.0000000000001" cy="324.0" rx="3.8" ry="5" fill="#181512"/>
<circle cx="794.8000000000001" cy="325.6" r="2.7" fill="url(#pin)"/>
<ellipse cx="780.0000000000001" cy="338.7" rx="3.8" ry="5" fill="#181512"/>
<circle cx="780.8000000000001" cy="340.3" r="2.7" fill="url(#pin)"/>
<use href="#screw7" x="743.1" y="287.6"/>
<use href="#screw7" x="819.1" y="362.6"/>
<text transform="translate(781.0 387.6) scale(0.74 1)" font-size="8.8" text-anchor="middle" text-rendering="geometricPrecision" font-family="Liberation Serif, Times New Roman, serif" fill="#d4d4d0">L</text>
<circle cx="881.8" cy="326" r="41.8" fill="#131313" stroke="#b0b0bc" stroke-width="0.65"/>
<circle cx="881.8" cy="326" r="39.4" fill="none" stroke="#1d1d1d" stroke-width="2"/>
<circle cx="881.8" cy="326" r="36.4" fill="url(#xlbev)"/>
<circle cx="881.8" cy="325.8" r="31.3" fill="url(#xlrin)"/>
<circle cx="881.8" cy="325.8" r="31.3" fill="none" stroke="#0a0a0a" stroke-width="1.2"/>
<path d="M873.7 293.6 A33.4 33.4 0 0 1 889.9 293.6" fill="none" stroke="#4545ff" stroke-width="4.6" stroke-linecap="round" filter="url(#blur1)"/>
<path d="M873.7 293.6 A33.4 33.4 0 0 1 889.9 293.6" fill="none" stroke="#f6f6ff" stroke-width="2.6" stroke-linecap="round"/>
<rect x="852.4" y="316.4" width="3.6" height="8.6" fill="#080808"/><rect x="907.1999999999999" y="316.4" width="3.6" height="8.6" fill="#080808"/>
<rect x="877.4" y="343.6" width="8.2" height="9.4" rx="1" fill="#080808" stroke="#454545" stroke-width="0.9"/>
<ellipse cx="866.7" cy="322.0" rx="3.8" ry="5" fill="#181512"/>
<circle cx="867.5" cy="323.6" r="2.7" fill="url(#pin)"/>
<ellipse cx="895.1" cy="324.0" rx="3.8" ry="5" fill="#181512"/>
<circle cx="895.9" cy="325.6" r="2.7" fill="url(#pin)"/>
<ellipse cx="881.1" cy="338.7" rx="3.8" ry="5" fill="#181512"/>
<circle cx="881.9" cy="340.3" r="2.7" fill="url(#pin)"/>
<use href="#screw7" x="844.1999999999999" y="287.6"/>
<use href="#screw7" x="920.1999999999999" y="362.6"/>
<text transform="translate(868 387.6) scale(0.74 1)" font-size="8.8" textLength="38.2" lengthAdjust="spacing" text-rendering="geometricPrecision" font-family="Liberation Serif, Times New Roman, serif" fill="#d4d4d0">REAR-R</text>
<circle cx="982.8" cy="326" r="41.8" fill="#131313" stroke="#b0b0bc" stroke-width="0.65"/>
<circle cx="982.8" cy="326" r="39.4" fill="none" stroke="#1d1d1d" stroke-width="2"/>
<circle cx="982.8" cy="326" r="36.4" fill="url(#xlbev)"/>
<circle cx="982.8" cy="325.8" r="31.3" fill="url(#xlrin)"/>
<circle cx="982.8" cy="325.8" r="31.3" fill="none" stroke="#0a0a0a" stroke-width="1.2"/>
<path d="M974.7 293.6 A33.4 33.4 0 0 1 990.9 293.6" fill="none" stroke="#4545ff" stroke-width="4.6" stroke-linecap="round" filter="url(#blur1)"/>
<path d="M974.7 293.6 A33.4 33.4 0 0 1 990.9 293.6" fill="none" stroke="#f6f6ff" stroke-width="2.6" stroke-linecap="round"/>
<rect x="953.4" y="316.4" width="3.6" height="8.6" fill="#080808"/><rect x="1008.1999999999999" y="316.4" width="3.6" height="8.6" fill="#080808"/>
<rect x="978.4" y="343.6" width="8.2" height="9.4" rx="1" fill="#080808" stroke="#454545" stroke-width="0.9"/>
<ellipse cx="967.7" cy="322.0" rx="3.8" ry="5" fill="#181512"/>
<circle cx="968.5" cy="323.6" r="2.7" fill="url(#pin)"/>
<ellipse cx="996.1" cy="324.0" rx="3.8" ry="5" fill="#181512"/>
<circle cx="996.9" cy="325.6" r="2.7" fill="url(#pin)"/>
<ellipse cx="982.1" cy="338.7" rx="3.8" ry="5" fill="#181512"/>
<circle cx="982.9" cy="340.3" r="2.7" fill="url(#pin)"/>
<use href="#screw7" x="945.1999999999999" y="287.6"/>
<use href="#screw7" x="1021.1999999999999" y="362.6"/>
<text transform="translate(968.8 387.6) scale(0.74 1)" font-size="8.8" textLength="38.1" lengthAdjust="spacing" text-rendering="geometricPrecision" font-family="Liberation Serif, Times New Roman, serif" fill="#d4d4d0">REAR-L</text>
<circle cx="1083.8" cy="326" r="41.8" fill="#131313" stroke="#b0b0bc" stroke-width="0.65"/>
<circle cx="1083.8" cy="326" r="39.4" fill="none" stroke="#1d1d1d" stroke-width="2"/>
<circle cx="1083.8" cy="326" r="36.4" fill="url(#xlbev)"/>
<circle cx="1083.8" cy="325.8" r="31.3" fill="url(#xlrin)"/>
<circle cx="1083.8" cy="325.8" r="31.3" fill="none" stroke="#0a0a0a" stroke-width="1.2"/>
<path d="M1075.7 293.6 A33.4 33.4 0 0 1 1091.9 293.6" fill="none" stroke="#4545ff" stroke-width="4.6" stroke-linecap="round" filter="url(#blur1)"/>
<path d="M1075.7 293.6 A33.4 33.4 0 0 1 1091.9 293.6" fill="none" stroke="#f6f6ff" stroke-width="2.6" stroke-linecap="round"/>
<rect x="1054.3999999999999" y="316.4" width="3.6" height="8.6" fill="#080808"/><rect x="1109.2" y="316.4" width="3.6" height="8.6" fill="#080808"/>
<rect x="1079.3999999999999" y="343.6" width="8.2" height="9.4" rx="1" fill="#080808" stroke="#454545" stroke-width="0.9"/>
<ellipse cx="1068.7" cy="322.0" rx="3.8" ry="5" fill="#181512"/>
<circle cx="1069.5" cy="323.6" r="2.7" fill="url(#pin)"/>
<ellipse cx="1097.1" cy="324.0" rx="3.8" ry="5" fill="#181512"/>
<circle cx="1097.8999999999999" cy="325.6" r="2.7" fill="url(#pin)"/>
<ellipse cx="1083.1" cy="338.7" rx="3.8" ry="5" fill="#181512"/>
<circle cx="1083.8999999999999" cy="340.3" r="2.7" fill="url(#pin)"/>
<use href="#screw7" x="1046.2" y="287.6"/>
<use href="#screw7" x="1122.2" y="362.6"/>
<text transform="translate(1069.3 387.6) scale(0.74 1)" font-size="8.8" textLength="38.8" lengthAdjust="spacing" text-rendering="geometricPrecision" font-family="Liberation Serif, Times New Roman, serif" fill="#d4d4d0">CENTER</text>
<circle cx="1184.9" cy="326" r="41.8" fill="#131313" stroke="#b0b0bc" stroke-width="0.65"/>
<circle cx="1184.9" cy="326" r="39.4" fill="none" stroke="#1d1d1d" stroke-width="2"/>
<circle cx="1184.9" cy="326" r="36.4" fill="url(#xlbev)"/>
<circle cx="1184.9" cy="325.8" r="31.3" fill="url(#xlrin)"/>
<circle cx="1184.9" cy="325.8" r="31.3" fill="none" stroke="#0a0a0a" stroke-width="1.2"/>
<path d="M1176.8 293.6 A33.4 33.4 0 0 1 1193.0 293.6" fill="none" stroke="#4545ff" stroke-width="4.6" stroke-linecap="round" filter="url(#blur1)"/>
<path d="M1176.8 293.6 A33.4 33.4 0 0 1 1193.0 293.6" fill="none" stroke="#f6f6ff" stroke-width="2.6" stroke-linecap="round"/>
<rect x="1155.5" y="316.4" width="3.6" height="8.6" fill="#080808"/><rect x="1210.3000000000002" y="316.4" width="3.6" height="8.6" fill="#080808"/>
<rect x="1180.5" y="343.6" width="8.2" height="9.4" rx="1" fill="#080808" stroke="#454545" stroke-width="0.9"/>
<ellipse cx="1169.8000000000002" cy="322.0" rx="3.8" ry="5" fill="#181512"/>
<circle cx="1170.6000000000001" cy="323.6" r="2.7" fill="url(#pin)"/>
<ellipse cx="1198.2" cy="324.0" rx="3.8" ry="5" fill="#181512"/>
<circle cx="1199.0" cy="325.6" r="2.7" fill="url(#pin)"/>
<ellipse cx="1184.2" cy="338.7" rx="3.8" ry="5" fill="#181512"/>
<circle cx="1185.0" cy="340.3" r="2.7" fill="url(#pin)"/>
<use href="#screw7" x="1147.3000000000002" y="287.6"/>
<use href="#screw7" x="1223.3000000000002" y="362.6"/>
<text transform="translate(1178.3 387.6) scale(0.74 1)" font-size="8.8" textLength="18.5" lengthAdjust="spacing" text-rendering="geometricPrecision" font-family="Liberation Serif, Times New Roman, serif" fill="#d4d4d0">SUB</text>
<path d="M1241 278.5 H1232.5 V397.5" fill="none" stroke="#d4d4d0" stroke-width="0.9" stroke-dasharray="3 1.6"/>
<path d="M1232.5 294.5 H1249 M1232.5 346.5 H1249 M1398.8 294.5 H1413.5 M1398.8 346.5 H1413.5 M1246 385.5 H1399" fill="none" stroke="#d4d4d0" stroke-width="0.9" stroke-dasharray="3 1.6"/>
<path d="M1403.8 278.5 H1413.5 V397.5" fill="none" stroke="#d4d4d0" stroke-width="0.9" stroke-dasharray="3 1.6"/>
<circle cx="1270" cy="296.1" r="21.5" fill="#131313"/>
<circle cx="1270" cy="295.6" r="20.8" fill="url(#silver)"/>
<circle cx="1270" cy="295.6" r="20.3" fill="none" stroke="url(#rimsh)" stroke-width="1.4"/>
<circle cx="1270.2" cy="295.8" r="15.6" fill="url(#groove)"/>
<circle cx="1270" cy="295.6" r="14.3" fill="url(#lip)"/>
<circle cx="1270.1" cy="295.6" r="11.7" fill="url(#wins)"/>
<circle cx="1270.3" cy="295.3" r="7.4" fill="#0e0705"/>
<circle cx="1270" cy="350.3" r="21.5" fill="#131313"/>
<circle cx="1270" cy="349.8" r="20.8" fill="url(#silver)"/>
<circle cx="1270" cy="349.8" r="20.3" fill="none" stroke="url(#rimsh)" stroke-width="1.4"/>
<circle cx="1270.2" cy="350.0" r="15.6" fill="url(#groove)"/>
<circle cx="1270" cy="349.8" r="14.3" fill="url(#lip)"/>
<circle cx="1270.1" cy="349.8" r="13.6" fill="#2c1a14"/>
<circle cx="1270.1" cy="349.8" r="12.6" fill="url(#rins)"/>
<circle cx="1270.3" cy="349.5" r="7.9" fill="#0e0705"/>
<circle cx="1323.4" cy="296.1" r="21.5" fill="#131313"/>
<circle cx="1323.4" cy="295.6" r="20.8" fill="url(#silver)"/>
<circle cx="1323.4" cy="295.6" r="20.3" fill="none" stroke="url(#rimsh)" stroke-width="1.4"/>
<circle cx="1323.6000000000001" cy="295.8" r="15.6" fill="url(#groove)"/>
<circle cx="1323.4" cy="295.6" r="14.3" fill="url(#lip)"/>
<circle cx="1323.5" cy="295.6" r="11.7" fill="url(#wins)"/>
<circle cx="1323.7" cy="295.3" r="7.4" fill="#0e0705"/>
<circle cx="1323.4" cy="350.3" r="21.5" fill="#131313"/>
<circle cx="1323.4" cy="349.8" r="20.8" fill="url(#silver)"/>
<circle cx="1323.4" cy="349.8" r="20.3" fill="none" stroke="url(#rimsh)" stroke-width="1.4"/>
<circle cx="1323.6000000000001" cy="350.0" r="15.6" fill="url(#groove)"/>
<circle cx="1323.4" cy="349.8" r="14.3" fill="url(#lip)"/>
<circle cx="1323.5" cy="349.8" r="13.6" fill="#2c1a14"/>
<circle cx="1323.5" cy="349.8" r="12.6" fill="url(#rins)"/>
<circle cx="1323.7" cy="349.5" r="7.9" fill="#0e0705"/>
<circle cx="1377.2" cy="296.1" r="21.5" fill="#131313"/>
<circle cx="1377.2" cy="295.6" r="20.8" fill="url(#silver)"/>
<circle cx="1377.2" cy="295.6" r="20.3" fill="none" stroke="url(#rimsh)" stroke-width="1.4"/>
<circle cx="1377.4" cy="295.8" r="15.6" fill="url(#groove)"/>
<circle cx="1377.2" cy="295.6" r="14.3" fill="url(#lip)"/>
<circle cx="1377.3" cy="295.6" r="11.7" fill="url(#wins)"/>
<circle cx="1377.5" cy="295.3" r="7.4" fill="#0e0705"/>
<circle cx="1377.2" cy="350.3" r="21.5" fill="#131313"/>
<circle cx="1377.2" cy="349.8" r="20.8" fill="url(#silver)"/>
<circle cx="1377.2" cy="349.8" r="20.3" fill="none" stroke="url(#rimsh)" stroke-width="1.4"/>
<circle cx="1377.4" cy="350.0" r="15.6" fill="url(#groove)"/>
<circle cx="1377.2" cy="349.8" r="14.3" fill="url(#lip)"/>
<circle cx="1377.3" cy="349.8" r="13.6" fill="#2c1a14"/>
<circle cx="1377.3" cy="349.8" r="12.6" fill="url(#rins)"/>
<circle cx="1377.5" cy="349.5" r="7.9" fill="#0e0705"/>
<use href="#screw7" x="1296.3" y="322"/>
<use href="#screw7" x="1350.3" y="322"/>
<use href="#screw7" x="1403.4" y="322"/>
<path d="M1255.5 376 L1258.2 382 H1252.8 Z M1255.5 395 L1258.2 389.4 H1252.8 Z" fill="#d4d4d0"/>
<text transform="translate(1270.0 382) scale(0.74 1)" font-size="8.8" text-anchor="middle" text-rendering="geometricPrecision" font-family="Liberation Serif, Times New Roman, serif" fill="#d4d4d0">L</text>
<text transform="translate(1270.0 395.2) scale(0.74 1)" font-size="8.8" text-anchor="middle" text-rendering="geometricPrecision" font-family="Liberation Serif, Times New Roman, serif" fill="#d4d4d0">R</text>
<text transform="translate(1309.5 382) scale(0.74 1)" font-size="8.8" textLength="37.8" lengthAdjust="spacing" text-rendering="geometricPrecision" font-family="Liberation Serif, Times New Roman, serif" fill="#d4d4d0">REAR-L</text>
<text transform="translate(1309.5 395.2) scale(0.74 1)" font-size="8.8" textLength="37.8" lengthAdjust="spacing" text-rendering="geometricPrecision" font-family="Liberation Serif, Times New Roman, serif" fill="#d4d4d0">REAR-R</text>
<text transform="translate(1362.5 382) scale(0.74 1)" font-size="8.8" textLength="38.5" lengthAdjust="spacing" text-rendering="geometricPrecision" font-family="Liberation Serif, Times New Roman, serif" fill="#d4d4d0">CENTER</text>
<text transform="translate(1370 395.2) scale(0.74 1)" font-size="8.8" textLength="18.9" lengthAdjust="spacing" text-rendering="geometricPrecision" font-family="Liberation Serif, Times New Roman, serif" fill="#d4d4d0">SUB</text>
<rect x="1445.5" y="308" width="37" height="23.3" rx="2" fill="none" stroke="#f2f2f2" stroke-width="1.1"/>
<text transform="translate(1451.2 328.3) scale(0.77 1)" font-size="24" font-weight="bold" textLength="34" lengthAdjust="spacing" font-family="Liberation Sans, Arial, sans-serif" fill="#f6f6f6">CE</text>
<ellipse cx="1463.9" cy="355.5" rx="18" ry="10.7" fill="none" stroke="#f4f4f4" stroke-width="1.6"/>
<text x="1464.2" y="359.3" font-size="12" font-weight="bold" text-anchor="middle" textLength="26.4" lengthAdjust="spacingAndGlyphs" font-family="Liberation Sans, Arial, sans-serif" fill="#f6f6f6" stroke="#f6f6f6" stroke-width="0.7">CQC</text>
<rect x="1462.4" y="361.6" width="2.6" height="1.2" fill="#e0e0e0"/>
<rect x="1533.4" y="272" width="118.6" height="86.8" rx="12" fill="#1b1b1b" stroke="#505050" stroke-width="0.8"/>
<path d="M1564 283.4 H1626.8 L1646 303.3 V343 Q1646 349 1640 349 H1548.5 Q1542.5 349 1542.5 343 V303.3 Z" fill="url(#cav)" stroke="#070707" stroke-width="1.4"/>
<path d="M1542.5 336 H1646 V343 Q1646 349 1640 349 H1548.5 Q1542.5 349 1542.5 343 Z" fill="#3a3a3a" opacity="0.45"/>
<path d="M1564 284.6 H1626.4" stroke="#4a4a4c" stroke-width="0.8" opacity="0.8"/>
<rect x="1577.4" y="295" width="18.2" height="20.4" rx="1.5" fill="#080808"/>
<rect x="1577.4" y="295" width="18.2" height="3" rx="1.5" fill="#1c1c1e"/>
<rect x="1589.1000000000001" y="304.2" width="5.6" height="8.6" rx="2" fill="#4a4af4" filter="url(#blur1)"/>
<rect x="1590.5" y="306.0" width="2.8" height="6.6" rx="1" fill="#fbeef4"/>
<rect x="1548.5" y="310.6" width="15.8" height="19.4" rx="1.5" fill="#080808"/>
<rect x="1548.5" y="310.6" width="15.8" height="3" rx="1.5" fill="#1c1c1e"/>
<rect x="1557.7" y="318.2" width="5.6" height="8.6" rx="2" fill="#4a4af4" filter="url(#blur1)"/>
<rect x="1559.1" y="320.0" width="2.8" height="6.6" rx="1" fill="#fbeef4"/>
<rect x="1605.1" y="311.6" width="15.8" height="18.6" rx="1.5" fill="#080808"/>
<rect x="1605.1" y="311.6" width="15.8" height="3" rx="1.5" fill="#1c1c1e"/>
<rect x="1613.9" y="316.8" width="5.6" height="8.6" rx="2" fill="#4a4af4" filter="url(#blur1)"/>
<rect x="1615.3" y="318.6" width="2.8" height="6.6" rx="1" fill="#fbeef4"/>
<rect x="1612.4" y="329.8" width="5" height="1.6" fill="#d8d8d8" opacity="0.8"/>
<use href="#screw7" transform="translate(1516.3 315) scale(1.2)"/>
<use href="#screw7" transform="translate(1668.8 315) scale(1.2)"/>
<text transform="translate(1569.7 370) scale(0.8 1)" font-size="7.2" textLength="56.7" lengthAdjust="spacing" text-rendering="geometricPrecision" font-family="Liberation Serif, Times New Roman, serif" fill="#d4d4d0">AC 220V/50Hz</text>
<rect x="1520.2" y="372" width="145" height="25.4" rx="1.5" fill="none" stroke="#d4d4d0" stroke-width="0.9"/>
<text transform="translate(1578.5 380.3) scale(0.76 1)" font-size="7.4" textLength="36.6" lengthAdjust="spacing" text-rendering="geometricPrecision" font-family="Liberation Serif, Times New Roman, serif" fill="#d4d4d0">CAUTION</text>
<text transform="translate(1549.6 387) scale(0.76 1)" font-size="7.4" textLength="112.6" lengthAdjust="spacing" text-rendering="geometricPrecision" font-family="Liberation Serif, Times New Roman, serif" fill="#d4d4d0">RISK OF ELECTRIC SHOCK</text>
<text transform="translate(1573.3 394) scale(0.76 1)" font-size="7.4" textLength="50.9" lengthAdjust="spacing" text-rendering="geometricPrecision" font-family="Liberation Serif, Times New Roman, serif" fill="#d4d4d0">DONOT OPEN</text>
<path d="M1533.4 375.6 L1542.8 394.3 H1523.6 Z M1650.5 375.6 L1660.3 394.3 H1640.6 Z" fill="none" stroke="#d4d4d0" stroke-width="0.9"/>
<path d="M1534.6 381 L1531.4 386.4 H1534.6 L1532.6 391.4" fill="none" stroke="#d4d4d0" stroke-width="1.1"/><path d="M1531.2 389.6 L1532.4 392.6 L1534.4 390.2 Z" fill="#d4d4d0"/>
<text x="1650.5" y="392" font-size="15" font-weight="bold" text-anchor="middle" font-family="Liberation Sans, Arial, sans-serif" fill="#d4d4d0">!</text>
</svg>
</body></html>
